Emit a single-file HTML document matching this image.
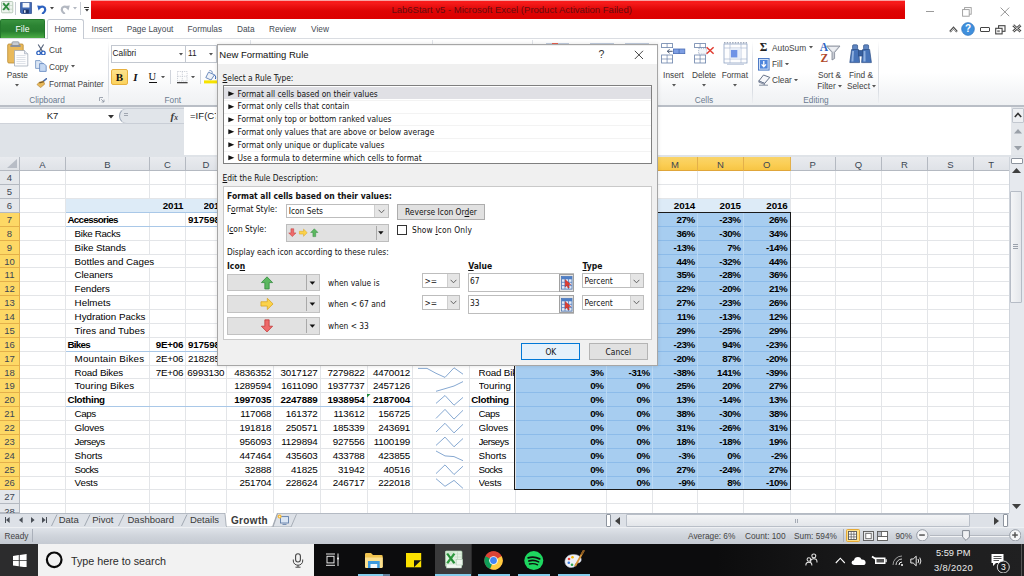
<!DOCTYPE html>
<html lang="en"><head><meta charset="utf-8"><title>Lab6Start v5 - Microsoft Excel</title>
<style>
html,body{margin:0;padding:0}
body{width:1024px;height:576px;overflow:hidden;position:relative;background:#fff;font-family:"Liberation Sans",sans-serif;color:#222}
.a{position:absolute;box-sizing:border-box}
.t{white-space:nowrap;overflow:visible}
.b{font-weight:bold}
.dlg{font-family:"DejaVu Sans Condensed","Liberation Sans",sans-serif}
.cell{color:#000}
u{text-decoration:underline}

</style></head>
<body>
<div class="a" style="left:0.00px;top:0.00px;width:1024.00px;height:19.00px;background:#fff"></div>
<div class="a" style="left:91.00px;top:0.00px;width:814.00px;height:18.60px;background:linear-gradient(#f9a8a8 0,#f9a0a0 4%,#f81818 8%,#f51a1a 18%,#e91010 35%,#de0303 58%,#dc0000 100%)"></div>
<div class="a t" style="left:391.40px;top:3.00px;line-height:14px;height:14px;font-size:9.5px;color:#650c10;letter-spacing:0.004px;">Lab6Start v5 - Microsoft Excel (Product Activation Failed)</div>
<div class="a" style="left:0.00px;top:19.00px;width:1024.00px;height:19.50px;background:#fff"></div>
<div class="a" style="left:0.00px;top:38.00px;width:1024.00px;height:67.50px;background:linear-gradient(#ffffff 0,#ffffff 50%,#f4f5f7 82%,#eff1f3 100%);border-top:1px solid #dadde2"></div>
<div class="a" style="left:0.00px;top:105.00px;width:1024.00px;height:2.00px;background:#b9bec6"></div>
<div class="a" style="left:0.00px;top:19.00px;width:45.30px;height:19.00px;background:linear-gradient(#3a9340 0,#2c8433 30%,#287e2f 62%,#3c9a3c 85%,#4cac45 100%);border-radius:2px 2px 0 0;border:1px solid #24782c;border-bottom:none"></div>
<div class="a t" style="left:2.50px;width:40px;text-align:center;top:22.00px;line-height:14px;height:14px;font-size:8.6px;color:#fff">File</div>
<div class="a" style="left:47.30px;top:19.30px;width:36.50px;height:19.70px;background:#fff;border:1px solid #c5cad3;border-bottom:none;border-radius:2.5px 2.5px 0 0"></div>
<div class="a t" style="left:25.50px;width:80px;text-align:center;top:22.00px;line-height:14px;height:14px;font-size:8.3px;color:#454a52">Home</div>
<div class="a t" style="left:62.00px;width:80px;text-align:center;top:22.00px;line-height:14px;height:14px;font-size:8.3px;color:#454a52">Insert</div>
<div class="a t" style="left:110.00px;width:80px;text-align:center;top:22.00px;line-height:14px;height:14px;font-size:8.3px;color:#454a52">Page Layout</div>
<div class="a t" style="left:164.75px;width:80px;text-align:center;top:22.00px;line-height:14px;height:14px;font-size:8.3px;color:#454a52">Formulas</div>
<div class="a t" style="left:205.75px;width:80px;text-align:center;top:22.00px;line-height:14px;height:14px;font-size:8.3px;color:#454a52">Data</div>
<div class="a t" style="left:242.50px;width:80px;text-align:center;top:22.00px;line-height:14px;height:14px;font-size:8.3px;color:#454a52">Review</div>
<div class="a t" style="left:280.00px;width:80px;text-align:center;top:22.00px;line-height:14px;height:14px;font-size:8.3px;color:#454a52">View</div>
<svg class="a" style="left:1.00px;top:1.00px;" width="12.5" height="12.5" viewBox="0 0 12.5 12.5"><rect x="0.5" y="0.5" width="11.3" height="11.3" rx="1" fill="#eef4ee" stroke="#9fb8a2" stroke-width="0.7"/><path d="M0.8,8.2H11.5M8.2,0.8V11.5M0.8,4.5H11.5" stroke="#b7cbb9" stroke-width="0.6"/><path d="M2.2,2.2 L8,9 M8,2.2 L2.2,9" stroke="#2e8b3d" stroke-width="1.9"/></svg>
<div class="a" style="left:15.00px;top:2.00px;width:1.00px;height:13.00px;background:#c8ccd3"></div>
<svg class="a" style="left:19.50px;top:1.80px;" width="12" height="12" viewBox="0 0 12 12"><path d="M0.5,0.5H11.5V11.5H1.6L0.5,10.4Z" fill="#4169b4" stroke="#2b4b8c" stroke-width="0.7"/><rect x="2.6" y="0.9" width="6.8" height="4.6" fill="#f5f7fb"/><rect x="3.2" y="7.5" width="5.6" height="3.9" fill="#1f3566"/><rect x="4" y="8.2" width="1.6" height="2.6" fill="#dfe6f3"/></svg>
<svg class="a" style="left:36.50px;top:3.50px;" width="10" height="10" viewBox="0 0 10 10"><path d="M2.2,4.2 C4.5,1.3 8.6,2.6 8.2,6 C8,7.4 7,8.6 5.8,9.4" fill="none" stroke="#2d62c0" stroke-width="2.1" stroke-linecap="round"/><polygon points="0.2,1.6 5,2 1.6,6.4" fill="#2d62c0"/></svg>
<svg class="a" style="left:50.00px;top:7.00px;" width="4" height="2.6" viewBox="0 0 4 2.6"><polygon points="0,0 4,0 2,2.4" fill="#444"/></svg>
<svg class="a" style="left:60.00px;top:3.50px;" width="10" height="10" viewBox="0 0 10 10"><path d="M7.8,4.2 C5.5,1.3 1.4,2.6 1.8,6 C2,7.4 3,8.6 4.2,9.4" fill="none" stroke="#b3b8c1" stroke-width="2.1" stroke-linecap="round"/><polygon points="9.8,1.6 5,2 8.4,6.4" fill="#b3b8c1"/></svg>
<svg class="a" style="left:72.50px;top:7.00px;" width="4" height="2.6" viewBox="0 0 4 2.6"><polygon points="0,0 4,0 2,2.4" fill="#b3b8c1"/></svg>
<div class="a" style="left:80.00px;top:2.00px;width:1.00px;height:13.00px;background:#c8ccd3"></div>
<div class="a" style="left:84.30px;top:6.80px;width:4.60px;height:1.00px;background:#333"></div>
<svg class="a" style="left:84.60px;top:9.00px;" width="4" height="2.6" viewBox="0 0 4 2.6"><polygon points="0,0 4,0 2,2.4" fill="#333"/></svg>
<div class="a" style="left:926.00px;top:11.00px;width:8.30px;height:1.00px;background:#9a9a9a"></div>
<svg class="a" style="left:961.50px;top:6.50px;" width="10" height="10" viewBox="0 0 10 10"><g fill="#fff" stroke="#9a9a9a" stroke-width="0.9"><rect x="2.6" y="0.6" width="6.6" height="6.6"/><rect x="0.6" y="2.6" width="6.6" height="6.6"/></g></svg>
<svg class="a" style="left:999.50px;top:7.00px;" width="10" height="10" viewBox="0 0 10 10"><path d="M0.6,0.6 L9.2,9.2 M9.2,0.6 L0.6,9.2" stroke="#8a8a8a" stroke-width="0.9" fill="none"/></svg>
<svg class="a" style="left:948.50px;top:25.50px;" width="9" height="7" viewBox="0 0 9 7"><polyline points="1,5.8 4.5,1.8 8,5.8" fill="none" stroke="#505050" stroke-width="2.1" stroke-linejoin="miter"/><polyline points="1.6,5.6 4.5,2.4 7.4,5.6" fill="none" stroke="#fff" stroke-width="0.7"/></svg>
<svg class="a" style="left:961.00px;top:21.50px;" width="14" height="14" viewBox="0 0 14 14"><circle cx="7" cy="7" r="6.4" fill="#3f8fdc" stroke="#2a6fb8" stroke-width="0.6"/></svg>
<div class="a t" style="left:962.00px;width:12px;text-align:center;top:21.60px;line-height:14px;height:14px;font-size:10px;color:#fff;font-weight:bold">?</div>
<div class="a" style="left:980.00px;top:27.00px;width:9.60px;height:5.00px;border:1.4px solid #444;border-radius:1px;background:#fff"></div>
<svg class="a" style="left:994.50px;top:24.50px;" width="11" height="10" viewBox="0 0 11 10"><g fill="#fff" stroke="#444" stroke-width="1.1"><rect x="3.6" y="0.7" width="6.4" height="5.6"/><rect x="0.7" y="3.3" width="6.4" height="5.6"/></g><rect x="2.2" y="5.2" width="2.6" height="2" fill="#888"/></svg>
<svg class="a" style="left:1011.50px;top:24.00px;" width="10" height="9" viewBox="0 0 10 9"><path d="M1.2,1.2 L8.6,7.6 M8.6,1.2 L1.2,7.6" stroke="#444" stroke-width="2.6" fill="none"/><path d="M1.2,1.2 L8.6,7.6 M8.6,1.2 L1.2,7.6" stroke="#fff" stroke-width="0.8" fill="none"/></svg>
<svg class="a" style="left:7.00px;top:41.00px;" width="22" height="26" viewBox="0 0 22 26"><rect x="0.7" y="3" width="15.5" height="19" rx="1.2" fill="#e9b95a" stroke="#b98a34" stroke-width="0.8"/><rect x="5" y="0.8" width="7" height="4.2" rx="1" fill="#c9cdd4" stroke="#7f8691" stroke-width="0.7"/><rect x="3.4" y="4" width="10.2" height="2" fill="#8b919c"/><path d="M7.5,9.5H17.5L20.8,12.8V25H7.5Z" fill="#fdfdfe" stroke="#9aa3b2" stroke-width="0.7"/><path d="M17.5,9.5V12.8H20.8" fill="#dfe4ec" stroke="#9aa3b2" stroke-width="0.6"/><path d="M9.5,14.5H18.5M9.5,16.5H18.5M9.5,18.5H18.5M9.5,20.5H18.5M9.5,22.5H18.5" stroke="#d0d5de" stroke-width="0.7"/></svg>
<div class="a t" style="left:-2.70px;width:40px;text-align:center;top:67.60px;line-height:14px;height:14px;font-size:8.3px;color:#414141">Paste</div>
<svg class="a" style="left:15.00px;top:84.00px;" width="4" height="2.6" viewBox="0 0 4 2.6"><polygon points="0,0 4,0 2,2.4" fill="#555"/></svg>
<svg class="a" style="left:36.00px;top:43.50px;" width="10" height="11.5" viewBox="0 0 10 11.5"><path d="M2.2,0.5 L6.6,7.6 M7.6,0.5 L3.2,7.6" stroke="#55627a" stroke-width="1.1" fill="none"/><ellipse cx="2.6" cy="9" rx="1.8" ry="1.9" fill="none" stroke="#2d62c0" stroke-width="1.3"/><ellipse cx="7.3" cy="9" rx="1.8" ry="1.9" fill="none" stroke="#2d62c0" stroke-width="1.3"/></svg>
<div class="a t" style="left:49.00px;top:42.60px;line-height:14px;height:14px;font-size:8.3px;color:#414141">Cut</div>
<svg class="a" style="left:35.00px;top:60.00px;" width="12" height="12" viewBox="0 0 12 12"><path d="M0.6,0.6H5L7,2.6V8.4H0.6Z" fill="#dbe6f5" stroke="#6f8fbf" stroke-width="0.8"/><path d="M4.6,3.6H9L11.2,5.8V11.4H4.6Z" fill="#c5d8f2" stroke="#5c82bd" stroke-width="0.8"/></svg>
<div class="a t" style="left:49.00px;top:59.60px;line-height:14px;height:14px;font-size:8.3px;color:#414141">Copy</div>
<svg class="a" style="left:70.50px;top:65.40px;" width="4" height="2.6" viewBox="0 0 4 2.6"><polygon points="0,0 4,0 2,2.4" fill="#555"/></svg>
<svg class="a" style="left:35.50px;top:77.50px;" width="11.5" height="10.5" viewBox="0 0 11.5 10.5"><path d="M7.2,3.4 L10.6,0.6" stroke="#4a6aa8" stroke-width="1.5" stroke-linecap="round"/><path d="M3.2,4.2 L7.6,3.2 L8.6,6.2 L4.6,9.6 L1,6.6 Z" fill="#e9b95a" stroke="#a87b2c" stroke-width="0.6"/><path d="M3.2,4.2 L7.6,3.2 L7.9,4.3 L3.5,5.4 Z" fill="#7b5a22"/></svg>
<div class="a t" style="left:49.00px;top:76.60px;line-height:14px;height:14px;font-size:8.3px;color:#414141">Format Painter</div>
<div class="a t" style="left:17.00px;width:60px;text-align:center;top:92.60px;line-height:14px;height:14px;font-size:8.3px;color:#6b7b90">Clipboard</div>
<svg class="a" style="left:99.00px;top:96.80px;" width="6" height="6" viewBox="0 0 6 6"><path d="M0.5,4V0.5H4" fill="none" stroke="#8a93a1" stroke-width="0.8"/><path d="M2.2,2.2L5,5M5,2.6V5H2.6" fill="none" stroke="#8a93a1" stroke-width="0.8"/></svg>
<div class="a" style="left:108.30px;top:41.00px;width:1.00px;height:62.00px;background:linear-gradient(#fff,#dde0e6 30%,#d9dde3 80%,#eceef1)"></div>
<div class="a" style="left:111.00px;top:45.30px;width:105.50px;height:17.40px;background:#fff;border:1px solid #c3c8d0"></div>
<div class="a" style="left:184.80px;top:45.30px;width:1.00px;height:17.40px;background:#c3c8d0"></div>
<div class="a t" style="left:112.60px;top:46.20px;line-height:14px;height:14px;font-size:8.3px;color:#222">Calibri</div>
<svg class="a" style="left:179.00px;top:53.10px;" width="4" height="2.6" viewBox="0 0 4 2.6"><polygon points="0,0 4,0 2,2.4" fill="#555"/></svg>
<div class="a t" style="left:188.00px;top:46.20px;line-height:14px;height:14px;font-size:8.3px;color:#222">11</div>
<svg class="a" style="left:209.00px;top:53.10px;" width="4" height="2.6" viewBox="0 0 4 2.6"><polygon points="0,0 4,0 2,2.4" fill="#555"/></svg>
<div class="a" style="left:111.00px;top:69.00px;width:16.60px;height:16.20px;background:linear-gradient(#fde28c,#fbd25c);border:1px solid #e8b13e;border-radius:2px"></div>
<div class="a t" style="left:112.30px;width:14px;text-align:center;top:70.00px;line-height:14px;height:14px;font-size:11px;color:#111;font-family:'Liberation Serif',serif;font-weight:bold">B</div>
<div class="a t" style="left:128.50px;width:14px;text-align:center;top:70.00px;line-height:14px;height:14px;font-size:11px;color:#111;font-family:'Liberation Serif',serif;font-weight:bold;font-style:italic">I</div>
<div class="a t" style="left:145.30px;width:14px;text-align:center;top:69.60px;line-height:14px;height:14px;font-size:10.5px;color:#111;font-family:'Liberation Serif',serif">U</div>
<div class="a" style="left:148.50px;top:82.00px;width:8.00px;height:1.00px;background:#111"></div>
<svg class="a" style="left:161.30px;top:75.80px;" width="4" height="2.6" viewBox="0 0 4 2.6"><polygon points="0,0 4,0 2,2.4" fill="#555"/></svg>
<div class="a" style="left:170.40px;top:70.00px;width:1.00px;height:14.00px;background:#d0d4db"></div>
<svg class="a" style="left:177.00px;top:71.00px;" width="11" height="12.5" viewBox="0 0 11 12.5"><rect x="0.5" y="0.5" width="9.6" height="9.6" fill="none" stroke="#b9bec8" stroke-width="0.7" stroke-dasharray="1.2,1"/><path d="M5.3,0.5V10M0.5,5.3H10" stroke="#b9bec8" stroke-width="0.7" stroke-dasharray="1.2,1"/><rect x="0" y="11" width="10.6" height="1.3" fill="#444"/></svg>
<svg class="a" style="left:190.70px;top:75.80px;" width="4" height="2.6" viewBox="0 0 4 2.6"><polygon points="0,0 4,0 2,2.4" fill="#555"/></svg>
<div class="a" style="left:199.50px;top:70.00px;width:1.00px;height:14.00px;background:#d0d4db"></div>
<svg class="a" style="left:203.50px;top:70.00px;" width="14" height="14" viewBox="0 0 14 14"><path d="M4.5,2.2 L10.5,4.8 L7,10 L1.8,7.6 Z" fill="#eef2f8" stroke="#5c7fb6" stroke-width="0.9"/><path d="M5.2,0.8 Q8.6,-0.2 8.2,3.6" fill="none" stroke="#5c7fb6" stroke-width="0.8"/><path d="M10.5,4.8 Q12.6,7 11.4,9" fill="none" stroke="#3d6fc0" stroke-width="1"/><rect x="0" y="10.4" width="13" height="3" fill="#f7e300"/></svg>
<div class="a t" style="left:152.80px;width:40px;text-align:center;top:92.60px;line-height:14px;height:14px;font-size:8.3px;color:#6b7b90">Font</div>
<div class="a" style="left:545.80px;top:43.20px;width:23.20px;height:1.20px;background:#c3cee0"></div>
<div class="a" style="left:589.50px;top:43.20px;width:24.50px;height:1.20px;background:#c3cee0"></div>
<div class="a" style="left:625.00px;top:43.20px;width:24.00px;height:1.20px;background:#c3cee0"></div>
<div class="a" style="left:552.00px;top:43.20px;width:6.00px;height:1.20px;background:#e8604f"></div>
<div class="a" style="left:250.00px;top:40.00px;width:1.00px;height:5.00px;background:#e1e4e9"></div>
<div class="a" style="left:432.00px;top:40.00px;width:1.00px;height:5.00px;background:#e1e4e9"></div>
<div class="a" style="left:531.50px;top:40.00px;width:1.00px;height:5.00px;background:#e1e4e9"></div>
<div class="a" style="left:657.30px;top:41.00px;width:1.00px;height:62.00px;background:linear-gradient(#fff,#dde0e6 30%,#d9dde3 80%,#eceef1)"></div>
<svg class="a" style="left:661.00px;top:43.00px;" width="25" height="21" viewBox="0 0 25 21"><rect x="0.6" y="0.6" width="11" height="4" fill="#fff" stroke="#6a82aa" stroke-width="0.8"/><path d="M6.1,0.6V4.6" stroke="#6a82aa" stroke-width="0.7"/><rect x="0.6" y="12" width="11" height="8" fill="#fff" stroke="#6a82aa" stroke-width="0.8"/><path d="M6.1,12V20M0.6,16H11.6" stroke="#6a82aa" stroke-width="0.7"/><rect x="12.4" y="6" width="11.4" height="4.6" fill="#7d9ee3" stroke="#4a6db5" stroke-width="0.8"/><path d="M18.1,6V10.6" stroke="#3f65ad" stroke-width="0.7"/><path d="M11.6,8.3H6.4M8.6,6.4L6.2,8.3L8.6,10.2" fill="none" stroke="#4a5a75" stroke-width="1"/></svg>
<div class="a t" style="left:653.50px;width:40px;text-align:center;top:67.60px;line-height:14px;height:14px;font-size:8.3px;color:#414141">Insert</div>
<svg class="a" style="left:671.50px;top:84.00px;" width="4" height="2.6" viewBox="0 0 4 2.6"><polygon points="0,0 4,0 2,2.4" fill="#555"/></svg>
<svg class="a" style="left:694.00px;top:43.00px;" width="22" height="21" viewBox="0 0 22 21"><rect x="0.6" y="0.6" width="11" height="4" fill="#fff" stroke="#6a82aa" stroke-width="0.8"/><path d="M6.1,0.6V4.6" stroke="#6a82aa" stroke-width="0.7"/><rect x="0.6" y="12" width="11" height="8" fill="#fff" stroke="#6a82aa" stroke-width="0.8"/><path d="M6.1,12V20M0.6,16H11.6" stroke="#6a82aa" stroke-width="0.7"/><rect x="4.6" y="5.6" width="8" height="5.4" fill="#f3f5f9" stroke="#9aa7be" stroke-width="0.7" stroke-dasharray="1.2,1"/><path d="M12.6,4.2L19.6,10.8M19.6,4.2L12.6,10.8" stroke="#e03c31" stroke-width="1.5"/></svg>
<div class="a t" style="left:684.00px;width:40px;text-align:center;top:67.60px;line-height:14px;height:14px;font-size:8.3px;color:#414141">Delete</div>
<svg class="a" style="left:702.00px;top:84.00px;" width="4" height="2.6" viewBox="0 0 4 2.6"><polygon points="0,0 4,0 2,2.4" fill="#555"/></svg>
<svg class="a" style="left:722.50px;top:42.00px;" width="26" height="24" viewBox="0 0 26 24"><rect x="1" y="2" width="23" height="19" fill="#fdfdfe" stroke="#8fa3c4" stroke-width="0.8"/><path d="M1,6H24M1,17H24M7,2V21M18,2V21" stroke="#a9b8d2" stroke-width="0.7"/><rect x="7.4" y="6.4" width="10.2" height="10.2" fill="#e6edf9"/><rect x="7.9" y="8" width="6.4" height="7.4" fill="#6f93e6"/><path d="M1,0.8H24" stroke="#59698a" stroke-width="0.8" stroke-dasharray="1.5,1.2"/><path d="M4,21.5H21V23H4Z" fill="#c9d2e2"/></svg>
<div class="a t" style="left:714.80px;width:40px;text-align:center;top:67.60px;line-height:14px;height:14px;font-size:8.3px;color:#414141">Format</div>
<svg class="a" style="left:732.80px;top:84.00px;" width="4" height="2.6" viewBox="0 0 4 2.6"><polygon points="0,0 4,0 2,2.4" fill="#555"/></svg>
<div class="a t" style="left:684.00px;width:40px;text-align:center;top:92.60px;line-height:14px;height:14px;font-size:8.3px;color:#6b7b90">Cells</div>
<div class="a" style="left:752.30px;top:41.00px;width:1.00px;height:62.00px;background:linear-gradient(#fff,#dde0e6 30%,#d9dde3 80%,#eceef1)"></div>
<div class="a t" style="left:757.50px;width:12px;text-align:center;top:40.40px;line-height:14px;height:14px;font-size:11.5px;color:#222;font-weight:bold;font-family:'Liberation Serif','DejaVu Serif',serif">Σ</div>
<div class="a t" style="left:772.00px;top:40.60px;line-height:14px;height:14px;font-size:8.3px;color:#414141">AutoSum</div>
<svg class="a" style="left:809.00px;top:46.40px;" width="4" height="2.6" viewBox="0 0 4 2.6"><polygon points="0,0 4,0 2,2.4" fill="#555"/></svg>
<svg class="a" style="left:758.00px;top:57.50px;" width="12" height="13" viewBox="0 0 12 13"><rect x="0.5" y="0.5" width="10.6" height="11.6" fill="#cfe0f7" stroke="#3f6fc0" stroke-width="0.9"/><rect x="2" y="2" width="7.6" height="8.6" fill="#4f86dc"/><path d="M5.8,3V8.2M3.6,6.4L5.8,8.8L8,6.4" fill="none" stroke="#fff" stroke-width="1.3"/></svg>
<div class="a t" style="left:772.00px;top:57.00px;line-height:14px;height:14px;font-size:8.3px;color:#414141">Fill</div>
<svg class="a" style="left:785.00px;top:62.80px;" width="4" height="2.6" viewBox="0 0 4 2.6"><polygon points="0,0 4,0 2,2.4" fill="#555"/></svg>
<svg class="a" style="left:757.50px;top:73.50px;" width="13" height="12" viewBox="0 0 13 12"><path d="M5.5,1 L11.8,3.4 L6.6,9.4 L0.8,7 Z" fill="#f6f7fa" stroke="#55627a" stroke-width="0.9"/><path d="M0.8,7 L6.6,9.4 L6.6,10.6 L0.8,8.2 Z" fill="#c9cfdb" stroke="#55627a" stroke-width="0.6"/><path d="M1,11.2H10" stroke="#55627a" stroke-width="0.7"/></svg>
<div class="a t" style="left:772.00px;top:73.00px;line-height:14px;height:14px;font-size:8.3px;color:#414141">Clear</div>
<svg class="a" style="left:794.00px;top:78.80px;" width="4" height="2.6" viewBox="0 0 4 2.6"><polygon points="0,0 4,0 2,2.4" fill="#555"/></svg>
<div class="a t" style="left:819.00px;width:10px;text-align:center;top:40.30px;line-height:14px;height:14px;font-size:11.5px;color:#2d62c0;font-weight:bold;font-family:'Liberation Serif',serif">A</div>
<div class="a t" style="left:819.30px;width:10px;text-align:center;top:50.80px;line-height:14px;height:14px;font-size:11.5px;color:#b0482a;font-weight:bold;font-family:'Liberation Serif',serif">Z</div>
<svg class="a" style="left:825.00px;top:44.50px;" width="16" height="16" viewBox="0 0 16 16"><path d="M1.5,1 H15 L9.6,7.4 V13.5 L7,15 V7.4 Z" fill="#c8ccd4" stroke="#7f8793" stroke-width="0.8"/><path d="M3.5,2 H13 L9,6.6 H7.6 Z" fill="#eceef2"/></svg>
<div class="a t" style="left:809.50px;width:40px;text-align:center;top:67.60px;line-height:14px;height:14px;font-size:8.3px;color:#414141">Sort &amp;</div>
<div class="a t" style="left:806.50px;width:40px;text-align:center;top:79.00px;line-height:14px;height:14px;font-size:8.3px;color:#414141">Filter</div>
<svg class="a" style="left:838.00px;top:85.20px;" width="4" height="2.6" viewBox="0 0 4 2.6"><polygon points="0,0 4,0 2,2.4" fill="#555"/></svg>
<svg class="a" style="left:849.00px;top:43.50px;" width="24" height="20" viewBox="0 0 24 20"><g stroke="#2c4f86" stroke-width="0.7"><rect x="3.6" y="0.8" width="5" height="5" rx="1" fill="#5f86c2"/><rect x="14.6" y="0.8" width="5" height="5" rx="1" fill="#5f86c2"/><path d="M2.6,5.5 H9.6 L10.6,18.6 H0.8 Z" fill="#4673b8"/><path d="M13.6,5.5 H20.6 L22.4,18.6 H12.6 Z" fill="#4673b8"/><rect x="9.4" y="6.5" width="4.4" height="5.5" fill="#365f9f"/></g><path d="M3.2,7 H5 L4.4,17.6 H2.4 Z" fill="#8fb0df"/><path d="M14.6,7 H16.4 L16.6,17.6 H14.4 Z" fill="#8fb0df"/></svg>
<div class="a t" style="left:841.00px;width:40px;text-align:center;top:67.60px;line-height:14px;height:14px;font-size:8.3px;color:#414141">Find &amp;</div>
<div class="a t" style="left:838.50px;width:40px;text-align:center;top:79.00px;line-height:14px;height:14px;font-size:8.3px;color:#414141">Select</div>
<svg class="a" style="left:871.50px;top:85.20px;" width="4" height="2.6" viewBox="0 0 4 2.6"><polygon points="0,0 4,0 2,2.4" fill="#555"/></svg>
<div class="a t" style="left:796.00px;width:40px;text-align:center;top:92.60px;line-height:14px;height:14px;font-size:8.3px;color:#6b7b90">Editing</div>
<div class="a" style="left:878.30px;top:41.00px;width:1.00px;height:62.00px;background:linear-gradient(#fff,#dde0e6 30%,#d9dde3 80%,#eceef1)"></div>
<div class="a" style="left:0.00px;top:107.00px;width:1024.00px;height:50.00px;background:#dfe3e8"></div>
<div class="a" style="left:184.00px;top:107.00px;width:827.00px;height:47.50px;background:#fff"></div>
<div class="a" style="left:0.00px;top:107.80px;width:128.00px;height:15.80px;background:#fff;border-bottom:1px solid #cfd3da;border-top:1px solid #cfd3da"></div>
<div class="a t" style="left:32.50px;width:40px;text-align:center;top:109.20px;line-height:14px;height:14px;font-size:9.5px;color:#222">K7</div>
<svg class="a" style="left:107.50px;top:114.50px;" width="6" height="4" viewBox="0 0 6 4"><polygon points="0,0 6,0 3,3.5" fill="#333"/></svg>
<div class="a" style="left:119.30px;top:107.80px;width:64.70px;height:15.80px;background:#e1e5ea;border:1px solid #c9ced6;border-left:1px solid #98a3b3;border-right:none;border-radius:8px 0 0 8px"></div>
<div class="a" style="left:123.50px;top:113.00px;width:4.00px;height:1.00px;background:#a0a6b0"></div>
<div class="a" style="left:123.50px;top:115.00px;width:4.00px;height:1.00px;background:#a0a6b0"></div>
<div class="a t" style="left:170.50px;top:109.30px;line-height:14px;height:14px;font-size:11px;font-family:'Liberation Serif',serif;font-style:italic;font-weight:bold;color:#3a3a3a">f</div>
<div class="a t" style="left:174.30px;top:111.20px;line-height:14px;height:14px;font-size:7.5px;font-family:'Liberation Serif',serif;font-style:italic;font-weight:bold;color:#3a3a3a">x</div>
<div class="a t" style="left:190px;top:109.2px;width:26px;overflow:hidden;line-height:14px;height:14px;font-size:9.6px;color:#222">=IF(C7=0,0,(D7-C7)/C7)</div>
<div class="a" style="left:1011.00px;top:107.00px;width:13.00px;height:47.50px;background:#e4e7eb"></div>
<div class="a" style="left:1011.50px;top:108.00px;width:12.00px;height:14.50px;background:#eef0f3;border:1px solid #c2c7cf;border-radius:1px"></div>
<svg class="a" style="left:1014.00px;top:112.00px;" width="8" height="6" viewBox="0 0 8 6"><polyline points="0.8,5 4,1.5 7.2,5" fill="none" stroke="#333" stroke-width="1.6"/></svg>
<svg class="a" style="left:1013.50px;top:128.50px;" width="8" height="5" viewBox="0 0 8 5"><polygon points="4,0 8,4.5 0,4.5" fill="#9aa0a8"/></svg>
<svg class="a" style="left:1013.50px;top:145.50px;" width="8" height="5" viewBox="0 0 8 5"><polygon points="0,0 8,0 4,4.5" fill="#9aa0a8"/></svg>
<div class="a" style="left:0.00px;top:154.50px;width:1024.00px;height:2.50px;background:#dfe3e8"></div>
<div class="a" style="left:0.00px;top:157.00px;width:1010.00px;height:356.00px;background:#fff"></div>
<div class="a" style="left:515.00px;top:212.01px;width:275.00px;height:277.40px;background:#a7cdf0"></div>
<div class="a" style="left:19.50px;top:184.27px;width:989.50px;height:1.00px;background:#e3e5e8"></div>
<div class="a" style="left:19.50px;top:198.14px;width:989.50px;height:1.00px;background:#e3e5e8"></div>
<div class="a" style="left:19.50px;top:212.01px;width:989.50px;height:1.00px;background:#e3e5e8"></div>
<div class="a" style="left:19.50px;top:225.88px;width:989.50px;height:1.00px;background:#e3e5e8"></div>
<div class="a" style="left:19.50px;top:239.75px;width:989.50px;height:1.00px;background:#e3e5e8"></div>
<div class="a" style="left:19.50px;top:253.62px;width:989.50px;height:1.00px;background:#e3e5e8"></div>
<div class="a" style="left:19.50px;top:267.49px;width:989.50px;height:1.00px;background:#e3e5e8"></div>
<div class="a" style="left:19.50px;top:281.36px;width:989.50px;height:1.00px;background:#e3e5e8"></div>
<div class="a" style="left:19.50px;top:295.23px;width:989.50px;height:1.00px;background:#e3e5e8"></div>
<div class="a" style="left:19.50px;top:309.10px;width:989.50px;height:1.00px;background:#e3e5e8"></div>
<div class="a" style="left:19.50px;top:322.97px;width:989.50px;height:1.00px;background:#e3e5e8"></div>
<div class="a" style="left:19.50px;top:336.84px;width:989.50px;height:1.00px;background:#e3e5e8"></div>
<div class="a" style="left:19.50px;top:350.71px;width:989.50px;height:1.00px;background:#e3e5e8"></div>
<div class="a" style="left:19.50px;top:364.58px;width:989.50px;height:1.00px;background:#e3e5e8"></div>
<div class="a" style="left:19.50px;top:378.45px;width:989.50px;height:1.00px;background:#e3e5e8"></div>
<div class="a" style="left:19.50px;top:392.32px;width:989.50px;height:1.00px;background:#e3e5e8"></div>
<div class="a" style="left:19.50px;top:406.19px;width:989.50px;height:1.00px;background:#e3e5e8"></div>
<div class="a" style="left:19.50px;top:420.06px;width:989.50px;height:1.00px;background:#e3e5e8"></div>
<div class="a" style="left:19.50px;top:433.93px;width:989.50px;height:1.00px;background:#e3e5e8"></div>
<div class="a" style="left:19.50px;top:447.80px;width:989.50px;height:1.00px;background:#e3e5e8"></div>
<div class="a" style="left:19.50px;top:461.67px;width:989.50px;height:1.00px;background:#e3e5e8"></div>
<div class="a" style="left:19.50px;top:475.54px;width:989.50px;height:1.00px;background:#e3e5e8"></div>
<div class="a" style="left:19.50px;top:489.41px;width:989.50px;height:1.00px;background:#e3e5e8"></div>
<div class="a" style="left:19.50px;top:503.28px;width:989.50px;height:1.00px;background:#e3e5e8"></div>
<div class="a" style="left:65.00px;top:170.50px;width:1.00px;height:342.50px;background:#e3e5e8"></div>
<div class="a" style="left:149.00px;top:170.50px;width:1.00px;height:342.50px;background:#e3e5e8"></div>
<div class="a" style="left:185.00px;top:170.50px;width:1.00px;height:342.50px;background:#e3e5e8"></div>
<div class="a" style="left:226.00px;top:170.50px;width:1.00px;height:342.50px;background:#e3e5e8"></div>
<div class="a" style="left:273.25px;top:170.50px;width:1.00px;height:342.50px;background:#e3e5e8"></div>
<div class="a" style="left:319.50px;top:170.50px;width:1.00px;height:342.50px;background:#e3e5e8"></div>
<div class="a" style="left:366.50px;top:170.50px;width:1.00px;height:342.50px;background:#e3e5e8"></div>
<div class="a" style="left:412.00px;top:170.50px;width:1.00px;height:342.50px;background:#e3e5e8"></div>
<div class="a" style="left:468.90px;top:170.50px;width:1.00px;height:342.50px;background:#e3e5e8"></div>
<div class="a" style="left:514.50px;top:170.50px;width:1.00px;height:342.50px;background:#e3e5e8"></div>
<div class="a" style="left:605.75px;top:170.50px;width:1.00px;height:342.50px;background:#e3e5e8"></div>
<div class="a" style="left:652.00px;top:170.50px;width:1.00px;height:342.50px;background:#e3e5e8"></div>
<div class="a" style="left:697.00px;top:170.50px;width:1.00px;height:342.50px;background:#e3e5e8"></div>
<div class="a" style="left:742.75px;top:170.50px;width:1.00px;height:342.50px;background:#e3e5e8"></div>
<div class="a" style="left:789.50px;top:170.50px;width:1.00px;height:342.50px;background:#e3e5e8"></div>
<div class="a" style="left:835.00px;top:170.50px;width:1.00px;height:342.50px;background:#e3e5e8"></div>
<div class="a" style="left:880.75px;top:170.50px;width:1.00px;height:342.50px;background:#e3e5e8"></div>
<div class="a" style="left:927.00px;top:170.50px;width:1.00px;height:342.50px;background:#e3e5e8"></div>
<div class="a" style="left:973.00px;top:170.50px;width:1.00px;height:342.50px;background:#e3e5e8"></div>
<div class="a" style="left:1008.50px;top:170.50px;width:1.00px;height:342.50px;background:#e3e5e8"></div>
<div class="a" style="left:65.50px;top:199.14px;width:724.50px;height:12.87px;background:#ddebf7"></div>
<div class="a" style="left:516.00px;top:225.88px;width:274.00px;height:1.00px;background:#8cbbe9"></div>
<div class="a" style="left:516.00px;top:239.75px;width:274.00px;height:1.00px;background:#8cbbe9"></div>
<div class="a" style="left:516.00px;top:253.62px;width:274.00px;height:1.00px;background:#8cbbe9"></div>
<div class="a" style="left:516.00px;top:267.49px;width:274.00px;height:1.00px;background:#8cbbe9"></div>
<div class="a" style="left:516.00px;top:281.36px;width:274.00px;height:1.00px;background:#8cbbe9"></div>
<div class="a" style="left:516.00px;top:295.23px;width:274.00px;height:1.00px;background:#8cbbe9"></div>
<div class="a" style="left:516.00px;top:309.10px;width:274.00px;height:1.00px;background:#8cbbe9"></div>
<div class="a" style="left:516.00px;top:322.97px;width:274.00px;height:1.00px;background:#8cbbe9"></div>
<div class="a" style="left:516.00px;top:336.84px;width:274.00px;height:1.00px;background:#8cbbe9"></div>
<div class="a" style="left:516.00px;top:350.71px;width:274.00px;height:1.00px;background:#8cbbe9"></div>
<div class="a" style="left:516.00px;top:364.58px;width:274.00px;height:1.00px;background:#8cbbe9"></div>
<div class="a" style="left:516.00px;top:378.45px;width:274.00px;height:1.00px;background:#8cbbe9"></div>
<div class="a" style="left:516.00px;top:392.32px;width:274.00px;height:1.00px;background:#8cbbe9"></div>
<div class="a" style="left:516.00px;top:406.19px;width:274.00px;height:1.00px;background:#8cbbe9"></div>
<div class="a" style="left:516.00px;top:420.06px;width:274.00px;height:1.00px;background:#8cbbe9"></div>
<div class="a" style="left:516.00px;top:433.93px;width:274.00px;height:1.00px;background:#8cbbe9"></div>
<div class="a" style="left:516.00px;top:447.80px;width:274.00px;height:1.00px;background:#8cbbe9"></div>
<div class="a" style="left:516.00px;top:461.67px;width:274.00px;height:1.00px;background:#8cbbe9"></div>
<div class="a" style="left:516.00px;top:475.54px;width:274.00px;height:1.00px;background:#8cbbe9"></div>
<div class="a" style="left:605.75px;top:213.01px;width:1.00px;height:277.40px;background:#b9d8f4"></div>
<div class="a" style="left:652.00px;top:213.01px;width:1.00px;height:277.40px;background:#b9d8f4"></div>
<div class="a" style="left:697.00px;top:213.01px;width:1.00px;height:277.40px;background:#b9d8f4"></div>
<div class="a" style="left:742.75px;top:213.01px;width:1.00px;height:277.40px;background:#b9d8f4"></div>
<div class="a" style="left:148.00px;top:254.62px;width:3.00px;height:12.87px;background:#fff"></div>
<div class="a" style="left:65.50px;top:212.01px;width:347.00px;height:1.00px;background:#a9c8e8"></div>
<div class="a" style="left:65.50px;top:225.88px;width:347.00px;height:1.00px;background:#a9c8e8"></div>
<div class="a" style="left:65.50px;top:350.71px;width:347.00px;height:1.00px;background:#a9c8e8"></div>
<div class="a" style="left:65.50px;top:406.19px;width:347.00px;height:1.00px;background:#a9c8e8"></div>
<div class="a" style="left:469.40px;top:406.19px;width:45.60px;height:1.00px;background:#a9c8e8"></div>
<div class="a" style="left:0.00px;top:157.00px;width:1010.00px;height:14.40px;background:linear-gradient(#e9ebef,#dfe2e7);border-bottom:1px solid #b4b9c1"></div>
<div class="a" style="left:652.50px;top:157.00px;width:137.50px;height:14.40px;background:linear-gradient(#f9d46a,#fbcf57 50%,#f7c544);border-bottom:1px solid #e0a63a"></div>
<div class="a" style="left:19.00px;top:157.00px;width:1.00px;height:14.40px;background:#b4b9c1"></div>
<div class="a" style="left:65.00px;top:157.00px;width:1.00px;height:14.40px;background:#b4b9c1"></div>
<div class="a t" style="left:27.50px;width:30px;text-align:center;top:157.80px;line-height:14px;height:14px;font-size:9.5px;color:#3c4653">A</div>
<div class="a" style="left:149.00px;top:157.00px;width:1.00px;height:14.40px;background:#b4b9c1"></div>
<div class="a t" style="left:92.50px;width:30px;text-align:center;top:157.80px;line-height:14px;height:14px;font-size:9.5px;color:#3c4653">B</div>
<div class="a" style="left:185.00px;top:157.00px;width:1.00px;height:14.40px;background:#b4b9c1"></div>
<div class="a t" style="left:152.50px;width:30px;text-align:center;top:157.80px;line-height:14px;height:14px;font-size:9.5px;color:#3c4653">C</div>
<div class="a" style="left:226.00px;top:157.00px;width:1.00px;height:14.40px;background:#b4b9c1"></div>
<div class="a t" style="left:191.00px;width:30px;text-align:center;top:157.80px;line-height:14px;height:14px;font-size:9.5px;color:#3c4653">D</div>
<div class="a" style="left:273.25px;top:157.00px;width:1.00px;height:14.40px;background:#b4b9c1"></div>
<div class="a t" style="left:235.12px;width:30px;text-align:center;top:157.80px;line-height:14px;height:14px;font-size:9.5px;color:#3c4653">E</div>
<div class="a" style="left:319.50px;top:157.00px;width:1.00px;height:14.40px;background:#b4b9c1"></div>
<div class="a t" style="left:281.88px;width:30px;text-align:center;top:157.80px;line-height:14px;height:14px;font-size:9.5px;color:#3c4653">F</div>
<div class="a" style="left:366.50px;top:157.00px;width:1.00px;height:14.40px;background:#b4b9c1"></div>
<div class="a t" style="left:328.50px;width:30px;text-align:center;top:157.80px;line-height:14px;height:14px;font-size:9.5px;color:#3c4653">G</div>
<div class="a" style="left:412.00px;top:157.00px;width:1.00px;height:14.40px;background:#b4b9c1"></div>
<div class="a t" style="left:374.75px;width:30px;text-align:center;top:157.80px;line-height:14px;height:14px;font-size:9.5px;color:#3c4653">H</div>
<div class="a" style="left:468.90px;top:157.00px;width:1.00px;height:14.40px;background:#b4b9c1"></div>
<div class="a t" style="left:425.95px;width:30px;text-align:center;top:157.80px;line-height:14px;height:14px;font-size:9.5px;color:#3c4653">I</div>
<div class="a" style="left:514.50px;top:157.00px;width:1.00px;height:14.40px;background:#b4b9c1"></div>
<div class="a t" style="left:477.20px;width:30px;text-align:center;top:157.80px;line-height:14px;height:14px;font-size:9.5px;color:#3c4653">J</div>
<div class="a" style="left:605.75px;top:157.00px;width:1.00px;height:14.40px;background:#b4b9c1"></div>
<div class="a t" style="left:545.62px;width:30px;text-align:center;top:157.80px;line-height:14px;height:14px;font-size:9.5px;color:#3c4653">K</div>
<div class="a" style="left:652.00px;top:157.00px;width:1.00px;height:14.40px;background:#e3b04a"></div>
<div class="a t" style="left:614.38px;width:30px;text-align:center;top:157.80px;line-height:14px;height:14px;font-size:9.5px;color:#3c4653">L</div>
<div class="a" style="left:697.00px;top:157.00px;width:1.00px;height:14.40px;background:#e3b04a"></div>
<div class="a t" style="left:660.00px;width:30px;text-align:center;top:157.80px;line-height:14px;height:14px;font-size:9.5px;color:#3c4653">M</div>
<div class="a" style="left:742.75px;top:157.00px;width:1.00px;height:14.40px;background:#e3b04a"></div>
<div class="a t" style="left:705.38px;width:30px;text-align:center;top:157.80px;line-height:14px;height:14px;font-size:9.5px;color:#3c4653">N</div>
<div class="a" style="left:789.50px;top:157.00px;width:1.00px;height:14.40px;background:#e3b04a"></div>
<div class="a t" style="left:751.62px;width:30px;text-align:center;top:157.80px;line-height:14px;height:14px;font-size:9.5px;color:#3c4653">O</div>
<div class="a" style="left:835.00px;top:157.00px;width:1.00px;height:14.40px;background:#b4b9c1"></div>
<div class="a t" style="left:797.75px;width:30px;text-align:center;top:157.80px;line-height:14px;height:14px;font-size:9.5px;color:#3c4653">P</div>
<div class="a" style="left:880.75px;top:157.00px;width:1.00px;height:14.40px;background:#b4b9c1"></div>
<div class="a t" style="left:843.38px;width:30px;text-align:center;top:157.80px;line-height:14px;height:14px;font-size:9.5px;color:#3c4653">Q</div>
<div class="a" style="left:927.00px;top:157.00px;width:1.00px;height:14.40px;background:#b4b9c1"></div>
<div class="a t" style="left:889.38px;width:30px;text-align:center;top:157.80px;line-height:14px;height:14px;font-size:9.5px;color:#3c4653">R</div>
<div class="a" style="left:973.00px;top:157.00px;width:1.00px;height:14.40px;background:#b4b9c1"></div>
<div class="a t" style="left:935.50px;width:30px;text-align:center;top:157.80px;line-height:14px;height:14px;font-size:9.5px;color:#3c4653">S</div>
<div class="a" style="left:1008.50px;top:157.00px;width:1.00px;height:14.40px;background:#b4b9c1"></div>
<div class="a t" style="left:976.25px;width:30px;text-align:center;top:157.80px;line-height:14px;height:14px;font-size:9.5px;color:#3c4653">T</div>
<svg class="a" style="left:6.00px;top:159.00px;" width="12" height="10" viewBox="0 0 12 10"><polygon points="11,0 11,9 1,9" fill="#b8bdc6"/></svg>
<div class="a" style="left:0.00px;top:171.40px;width:19.50px;height:13.87px;background:#e4e7eb;border-bottom:1px solid #b4b9c1;border-right:1px solid #b4b9c1"></div>
<div class="a t" style="left:0.00px;width:19px;text-align:center;top:171.34px;line-height:14px;height:14px;font-size:9.5px;color:#3c4653">4</div>
<div class="a" style="left:0.00px;top:185.27px;width:19.50px;height:13.87px;background:#e4e7eb;border-bottom:1px solid #b4b9c1;border-right:1px solid #b4b9c1"></div>
<div class="a t" style="left:0.00px;width:19px;text-align:center;top:185.21px;line-height:14px;height:14px;font-size:9.5px;color:#3c4653">5</div>
<div class="a" style="left:0.00px;top:199.14px;width:19.50px;height:13.87px;background:#e4e7eb;border-bottom:1px solid #b4b9c1;border-right:1px solid #b4b9c1"></div>
<div class="a t" style="left:0.00px;width:19px;text-align:center;top:199.08px;line-height:14px;height:14px;font-size:9.5px;color:#3c4653">6</div>
<div class="a" style="left:0.00px;top:213.01px;width:19.50px;height:13.87px;background:#fdd865;border-bottom:1px solid #e3b04a;border-right:1px solid #e3b04a"></div>
<div class="a t" style="left:0.00px;width:19px;text-align:center;top:212.94px;line-height:14px;height:14px;font-size:9.5px;color:#3c4653">7</div>
<div class="a" style="left:0.00px;top:226.88px;width:19.50px;height:13.87px;background:#fdd865;border-bottom:1px solid #e3b04a;border-right:1px solid #e3b04a"></div>
<div class="a t" style="left:0.00px;width:19px;text-align:center;top:226.81px;line-height:14px;height:14px;font-size:9.5px;color:#3c4653">8</div>
<div class="a" style="left:0.00px;top:240.75px;width:19.50px;height:13.87px;background:#fdd865;border-bottom:1px solid #e3b04a;border-right:1px solid #e3b04a"></div>
<div class="a t" style="left:0.00px;width:19px;text-align:center;top:240.69px;line-height:14px;height:14px;font-size:9.5px;color:#3c4653">9</div>
<div class="a" style="left:0.00px;top:254.62px;width:19.50px;height:13.87px;background:#fdd865;border-bottom:1px solid #e3b04a;border-right:1px solid #e3b04a"></div>
<div class="a t" style="left:0.00px;width:19px;text-align:center;top:254.56px;line-height:14px;height:14px;font-size:9.5px;color:#3c4653">10</div>
<div class="a" style="left:0.00px;top:268.49px;width:19.50px;height:13.87px;background:#fdd865;border-bottom:1px solid #e3b04a;border-right:1px solid #e3b04a"></div>
<div class="a t" style="left:0.00px;width:19px;text-align:center;top:268.43px;line-height:14px;height:14px;font-size:9.5px;color:#3c4653">11</div>
<div class="a" style="left:0.00px;top:282.36px;width:19.50px;height:13.87px;background:#fdd865;border-bottom:1px solid #e3b04a;border-right:1px solid #e3b04a"></div>
<div class="a t" style="left:0.00px;width:19px;text-align:center;top:282.30px;line-height:14px;height:14px;font-size:9.5px;color:#3c4653">12</div>
<div class="a" style="left:0.00px;top:296.23px;width:19.50px;height:13.87px;background:#fdd865;border-bottom:1px solid #e3b04a;border-right:1px solid #e3b04a"></div>
<div class="a t" style="left:0.00px;width:19px;text-align:center;top:296.17px;line-height:14px;height:14px;font-size:9.5px;color:#3c4653">13</div>
<div class="a" style="left:0.00px;top:310.10px;width:19.50px;height:13.87px;background:#fdd865;border-bottom:1px solid #e3b04a;border-right:1px solid #e3b04a"></div>
<div class="a t" style="left:0.00px;width:19px;text-align:center;top:310.04px;line-height:14px;height:14px;font-size:9.5px;color:#3c4653">14</div>
<div class="a" style="left:0.00px;top:323.97px;width:19.50px;height:13.87px;background:#fdd865;border-bottom:1px solid #e3b04a;border-right:1px solid #e3b04a"></div>
<div class="a t" style="left:0.00px;width:19px;text-align:center;top:323.91px;line-height:14px;height:14px;font-size:9.5px;color:#3c4653">15</div>
<div class="a" style="left:0.00px;top:337.84px;width:19.50px;height:13.87px;background:#fdd865;border-bottom:1px solid #e3b04a;border-right:1px solid #e3b04a"></div>
<div class="a t" style="left:0.00px;width:19px;text-align:center;top:337.78px;line-height:14px;height:14px;font-size:9.5px;color:#3c4653">16</div>
<div class="a" style="left:0.00px;top:351.71px;width:19.50px;height:13.87px;background:#fdd865;border-bottom:1px solid #e3b04a;border-right:1px solid #e3b04a"></div>
<div class="a t" style="left:0.00px;width:19px;text-align:center;top:351.65px;line-height:14px;height:14px;font-size:9.5px;color:#3c4653">17</div>
<div class="a" style="left:0.00px;top:365.58px;width:19.50px;height:13.87px;background:#fdd865;border-bottom:1px solid #e3b04a;border-right:1px solid #e3b04a"></div>
<div class="a t" style="left:0.00px;width:19px;text-align:center;top:365.51px;line-height:14px;height:14px;font-size:9.5px;color:#3c4653">18</div>
<div class="a" style="left:0.00px;top:379.45px;width:19.50px;height:13.87px;background:#fdd865;border-bottom:1px solid #e3b04a;border-right:1px solid #e3b04a"></div>
<div class="a t" style="left:0.00px;width:19px;text-align:center;top:379.38px;line-height:14px;height:14px;font-size:9.5px;color:#3c4653">19</div>
<div class="a" style="left:0.00px;top:393.32px;width:19.50px;height:13.87px;background:#fdd865;border-bottom:1px solid #e3b04a;border-right:1px solid #e3b04a"></div>
<div class="a t" style="left:0.00px;width:19px;text-align:center;top:393.25px;line-height:14px;height:14px;font-size:9.5px;color:#3c4653">20</div>
<div class="a" style="left:0.00px;top:407.19px;width:19.50px;height:13.87px;background:#fdd865;border-bottom:1px solid #e3b04a;border-right:1px solid #e3b04a"></div>
<div class="a t" style="left:0.00px;width:19px;text-align:center;top:407.12px;line-height:14px;height:14px;font-size:9.5px;color:#3c4653">21</div>
<div class="a" style="left:0.00px;top:421.06px;width:19.50px;height:13.87px;background:#fdd865;border-bottom:1px solid #e3b04a;border-right:1px solid #e3b04a"></div>
<div class="a t" style="left:0.00px;width:19px;text-align:center;top:421.00px;line-height:14px;height:14px;font-size:9.5px;color:#3c4653">22</div>
<div class="a" style="left:0.00px;top:434.93px;width:19.50px;height:13.87px;background:#fdd865;border-bottom:1px solid #e3b04a;border-right:1px solid #e3b04a"></div>
<div class="a t" style="left:0.00px;width:19px;text-align:center;top:434.86px;line-height:14px;height:14px;font-size:9.5px;color:#3c4653">23</div>
<div class="a" style="left:0.00px;top:448.80px;width:19.50px;height:13.87px;background:#fdd865;border-bottom:1px solid #e3b04a;border-right:1px solid #e3b04a"></div>
<div class="a t" style="left:0.00px;width:19px;text-align:center;top:448.73px;line-height:14px;height:14px;font-size:9.5px;color:#3c4653">24</div>
<div class="a" style="left:0.00px;top:462.67px;width:19.50px;height:13.87px;background:#fdd865;border-bottom:1px solid #e3b04a;border-right:1px solid #e3b04a"></div>
<div class="a t" style="left:0.00px;width:19px;text-align:center;top:462.60px;line-height:14px;height:14px;font-size:9.5px;color:#3c4653">25</div>
<div class="a" style="left:0.00px;top:476.54px;width:19.50px;height:13.87px;background:#fdd865;border-bottom:1px solid #e3b04a;border-right:1px solid #e3b04a"></div>
<div class="a t" style="left:0.00px;width:19px;text-align:center;top:476.47px;line-height:14px;height:14px;font-size:9.5px;color:#3c4653">26</div>
<div class="a" style="left:0.00px;top:490.41px;width:19.50px;height:13.87px;background:#e4e7eb;border-bottom:1px solid #b4b9c1;border-right:1px solid #b4b9c1"></div>
<div class="a t" style="left:0.00px;width:19px;text-align:center;top:490.34px;line-height:14px;height:14px;font-size:9.5px;color:#3c4653">27</div>
<div class="a" style="left:0.00px;top:504.28px;width:19.50px;height:8.72px;background:#e4e7eb;border-bottom:1px solid #b4b9c1;border-right:1px solid #b4b9c1"></div>
<div class="a t" style="left:0;width:19px;text-align:center;top:504.78px;height:8.22px;overflow:hidden;line-height:14px;font-size:9.5px;color:#3c4653">28</div>
<div class="a t b cell" style="left:67.40px;top:212.94px;line-height:14px;height:14px;font-size:9.8px;letter-spacing:-0.658px;">Accessories</div>
<div class="a t cell" style="left:74.60px;top:226.81px;line-height:14px;height:14px;font-size:9.8px;letter-spacing:-0.330px;">Bike Racks</div>
<div class="a t cell" style="left:74.60px;top:240.69px;line-height:14px;height:14px;font-size:9.8px;letter-spacing:-0.089px;">Bike Stands</div>
<div class="a t cell" style="left:74.60px;top:254.56px;line-height:14px;height:14px;font-size:9.8px;letter-spacing:-0.027px;">Bottles and Cages</div>
<div class="a t cell" style="left:74.60px;top:268.43px;line-height:14px;height:14px;font-size:9.8px;letter-spacing:-0.115px;">Cleaners</div>
<div class="a t cell" style="left:74.60px;top:282.30px;line-height:14px;height:14px;font-size:9.8px;letter-spacing:-0.108px;">Fenders</div>
<div class="a t cell" style="left:74.60px;top:296.17px;line-height:14px;height:14px;font-size:9.8px;letter-spacing:0.023px;">Helmets</div>
<div class="a t cell" style="left:74.60px;top:310.04px;line-height:14px;height:14px;font-size:9.8px;letter-spacing:-0.036px;">Hydration Packs</div>
<div class="a t cell" style="left:74.60px;top:323.91px;line-height:14px;height:14px;font-size:9.8px;letter-spacing:0.034px;">Tires and Tubes</div>
<div class="a t b cell" style="left:67.40px;top:337.78px;line-height:14px;height:14px;font-size:9.8px;letter-spacing:-0.691px;">Bikes</div>
<div class="a t cell" style="left:74.60px;top:351.65px;line-height:14px;height:14px;font-size:9.8px;letter-spacing:0.194px;">Mountain Bikes</div>
<div class="a t cell" style="left:74.60px;top:365.51px;line-height:14px;height:14px;font-size:9.8px;letter-spacing:-0.171px;">Road Bikes</div>
<div class="a t cell" style="left:74.60px;top:379.38px;line-height:14px;height:14px;font-size:9.8px;letter-spacing:0.061px;">Touring Bikes</div>
<div class="a t b cell" style="left:67.40px;top:393.25px;line-height:14px;height:14px;font-size:9.8px;letter-spacing:-0.290px;">Clothing</div>
<div class="a t cell" style="left:74.60px;top:407.12px;line-height:14px;height:14px;font-size:9.8px;letter-spacing:-0.469px;">Caps</div>
<div class="a t cell" style="left:74.60px;top:421.00px;line-height:14px;height:14px;font-size:9.8px;letter-spacing:-0.167px;">Gloves</div>
<div class="a t cell" style="left:74.60px;top:434.86px;line-height:14px;height:14px;font-size:9.8px;letter-spacing:-0.538px;">Jerseys</div>
<div class="a t cell" style="left:74.60px;top:448.73px;line-height:14px;height:14px;font-size:9.8px;letter-spacing:-0.088px;">Shorts</div>
<div class="a t cell" style="left:74.60px;top:462.60px;line-height:14px;height:14px;font-size:9.8px;letter-spacing:-0.658px;">Socks</div>
<div class="a t cell" style="left:74.60px;top:476.47px;line-height:14px;height:14px;font-size:9.8px;letter-spacing:-0.194px;">Vests</div>
<div class="a t b cell" style="right:840.60px;top:199.08px;line-height:14px;height:14px;font-size:9.8px;letter-spacing:-0.165px;">2011</div>
<div class="a t b cell" style="left:203.5px;top:199.08px;width:13px;overflow:hidden;line-height:14px;height:14px;font-size:9.8px;letter-spacing:-0.165px;">2012</div>
<div class="a t b cell" style="right:329.00px;top:199.08px;line-height:14px;height:14px;font-size:9.8px;letter-spacing:-0.165px;">2014</div>
<div class="a t b cell" style="right:283.25px;top:199.08px;line-height:14px;height:14px;font-size:9.8px;letter-spacing:-0.165px;">2015</div>
<div class="a t b cell" style="right:236.50px;top:199.08px;line-height:14px;height:14px;font-size:9.8px;letter-spacing:-0.165px;">2016</div>
<div class="a t b cell" style="right:840.60px;top:337.78px;line-height:14px;height:14px;font-size:9.8px;letter-spacing:-0.165px;">9E+06</div>
<div class="a t cell" style="right:840.60px;top:351.65px;line-height:14px;height:14px;font-size:9.8px;letter-spacing:-0.165px;">2E+06</div>
<div class="a t cell" style="right:840.60px;top:365.51px;line-height:14px;height:14px;font-size:9.8px;letter-spacing:-0.165px;">7E+06</div>
<div class="a t cell b" style="left:188px;top:212.94px;width:29px;overflow:hidden;line-height:14px;height:14px;font-size:9.8px;letter-spacing:-0.165px;">9175988</div>
<div class="a t cell b" style="left:188px;top:337.78px;width:29px;overflow:hidden;line-height:14px;height:14px;font-size:9.8px;letter-spacing:-0.165px;">9175988</div>
<div class="a t cell" style="left:188px;top:351.65px;width:29px;overflow:hidden;line-height:14px;height:14px;font-size:9.8px;letter-spacing:-0.165px;">2182859</div>
<div class="a t cell" style="right:799.70px;top:365.51px;line-height:14px;height:14px;font-size:9.8px;letter-spacing:-0.165px;">6993130</div>
<div class="a t cell" style="right:752.75px;top:365.51px;line-height:14px;height:14px;font-size:9.8px;letter-spacing:-0.165px;">4836352</div>
<div class="a t cell" style="right:706.50px;top:365.51px;line-height:14px;height:14px;font-size:9.8px;letter-spacing:-0.165px;">3017127</div>
<div class="a t cell" style="right:659.50px;top:365.51px;line-height:14px;height:14px;font-size:9.8px;letter-spacing:-0.165px;">7279822</div>
<div class="a t cell" style="right:614.00px;top:365.51px;line-height:14px;height:14px;font-size:9.8px;letter-spacing:-0.165px;">4470012</div>
<div class="a t cell" style="right:752.75px;top:379.38px;line-height:14px;height:14px;font-size:9.8px;letter-spacing:-0.165px;">1289594</div>
<div class="a t cell" style="right:706.50px;top:379.38px;line-height:14px;height:14px;font-size:9.8px;letter-spacing:-0.165px;">1611090</div>
<div class="a t cell" style="right:659.50px;top:379.38px;line-height:14px;height:14px;font-size:9.8px;letter-spacing:-0.165px;">1937737</div>
<div class="a t cell" style="right:614.00px;top:379.38px;line-height:14px;height:14px;font-size:9.8px;letter-spacing:-0.165px;">2457126</div>
<div class="a t b cell" style="right:752.75px;top:393.25px;line-height:14px;height:14px;font-size:9.8px;letter-spacing:-0.165px;">1997035</div>
<div class="a t b cell" style="right:706.50px;top:393.25px;line-height:14px;height:14px;font-size:9.8px;letter-spacing:-0.165px;">2247889</div>
<div class="a t b cell" style="right:659.50px;top:393.25px;line-height:14px;height:14px;font-size:9.8px;letter-spacing:-0.165px;">1938954</div>
<div class="a t b cell" style="right:614.00px;top:393.25px;line-height:14px;height:14px;font-size:9.8px;letter-spacing:-0.165px;">2187004</div>
<div class="a t cell" style="right:752.75px;top:407.12px;line-height:14px;height:14px;font-size:9.8px;letter-spacing:-0.165px;">117068</div>
<div class="a t cell" style="right:706.50px;top:407.12px;line-height:14px;height:14px;font-size:9.8px;letter-spacing:-0.165px;">161372</div>
<div class="a t cell" style="right:659.50px;top:407.12px;line-height:14px;height:14px;font-size:9.8px;letter-spacing:-0.165px;">113612</div>
<div class="a t cell" style="right:614.00px;top:407.12px;line-height:14px;height:14px;font-size:9.8px;letter-spacing:-0.165px;">156725</div>
<div class="a t cell" style="right:752.75px;top:421.00px;line-height:14px;height:14px;font-size:9.8px;letter-spacing:-0.165px;">191818</div>
<div class="a t cell" style="right:706.50px;top:421.00px;line-height:14px;height:14px;font-size:9.8px;letter-spacing:-0.165px;">250571</div>
<div class="a t cell" style="right:659.50px;top:421.00px;line-height:14px;height:14px;font-size:9.8px;letter-spacing:-0.165px;">185339</div>
<div class="a t cell" style="right:614.00px;top:421.00px;line-height:14px;height:14px;font-size:9.8px;letter-spacing:-0.165px;">243691</div>
<div class="a t cell" style="right:752.75px;top:434.86px;line-height:14px;height:14px;font-size:9.8px;letter-spacing:-0.165px;">956093</div>
<div class="a t cell" style="right:706.50px;top:434.86px;line-height:14px;height:14px;font-size:9.8px;letter-spacing:-0.165px;">1129894</div>
<div class="a t cell" style="right:659.50px;top:434.86px;line-height:14px;height:14px;font-size:9.8px;letter-spacing:-0.165px;">927556</div>
<div class="a t cell" style="right:614.00px;top:434.86px;line-height:14px;height:14px;font-size:9.8px;letter-spacing:-0.165px;">1100199</div>
<div class="a t cell" style="right:752.75px;top:448.73px;line-height:14px;height:14px;font-size:9.8px;letter-spacing:-0.165px;">447464</div>
<div class="a t cell" style="right:706.50px;top:448.73px;line-height:14px;height:14px;font-size:9.8px;letter-spacing:-0.165px;">435603</div>
<div class="a t cell" style="right:659.50px;top:448.73px;line-height:14px;height:14px;font-size:9.8px;letter-spacing:-0.165px;">433788</div>
<div class="a t cell" style="right:614.00px;top:448.73px;line-height:14px;height:14px;font-size:9.8px;letter-spacing:-0.165px;">423855</div>
<div class="a t cell" style="right:752.75px;top:462.60px;line-height:14px;height:14px;font-size:9.8px;letter-spacing:-0.165px;">32888</div>
<div class="a t cell" style="right:706.50px;top:462.60px;line-height:14px;height:14px;font-size:9.8px;letter-spacing:-0.165px;">41825</div>
<div class="a t cell" style="right:659.50px;top:462.60px;line-height:14px;height:14px;font-size:9.8px;letter-spacing:-0.165px;">31942</div>
<div class="a t cell" style="right:614.00px;top:462.60px;line-height:14px;height:14px;font-size:9.8px;letter-spacing:-0.165px;">40516</div>
<div class="a t cell" style="right:752.75px;top:476.47px;line-height:14px;height:14px;font-size:9.8px;letter-spacing:-0.165px;">251704</div>
<div class="a t cell" style="right:706.50px;top:476.47px;line-height:14px;height:14px;font-size:9.8px;letter-spacing:-0.165px;">228624</div>
<div class="a t cell" style="right:659.50px;top:476.47px;line-height:14px;height:14px;font-size:9.8px;letter-spacing:-0.165px;">246717</div>
<div class="a t cell" style="right:614.00px;top:476.47px;line-height:14px;height:14px;font-size:9.8px;letter-spacing:-0.165px;">222018</div>
<svg class="a" style="left:367.30px;top:393.62px;" width="4" height="4" viewBox="0 0 4 4"><polygon points="0,0 3.5,0 0,3.5" fill="#1e8a3c"/></svg>
<svg class="a" style="left:0;top:0" width="520" height="520" viewBox="0 0 520 520"><g fill="none" stroke="#5d8bc2" stroke-width="0.75"><polyline points="418.0,368.4 427.0,368.4 436.0,373.3 445.0,377.4 454.0,367.8 463.0,374.2"/><polyline points="436.0,391.3 445.0,388.7 454.0,386.0 463.0,381.6"/><polyline points="436.0,403.4 445.0,395.5 454.0,405.2 463.0,397.4"/><polyline points="436.0,418.4 445.0,409.4 454.0,419.1 463.0,410.3"/><polyline points="436.0,432.0 445.0,423.3 454.0,432.9 463.0,424.3"/><polyline points="436.0,445.4 445.0,437.1 454.0,446.8 463.0,438.5"/><polyline points="436.0,451.0 445.0,455.9 454.0,456.6 463.0,460.7"/><polyline points="436.0,473.6 445.0,464.9 454.0,474.5 463.0,466.2"/><polyline points="436.0,478.7 445.0,486.3 454.0,480.4 463.0,488.4"/></g></svg>
<div class="a t cell" style="left:478.5px;top:365.51px;width:36.0px;overflow:hidden;line-height:14px;height:14px;font-size:9.8px;letter-spacing:-0.171px;">Road Bikes</div>
<div class="a t cell" style="left:478.5px;top:379.38px;width:36.0px;overflow:hidden;line-height:14px;height:14px;font-size:9.8px;letter-spacing:0.061px;">Touring Bikes</div>
<div class="a t cell b" style="left:471.3px;top:393.25px;width:43.2px;overflow:hidden;line-height:14px;height:14px;font-size:9.8px;letter-spacing:-0.290px;">Clothing</div>
<div class="a t cell" style="left:478.5px;top:407.12px;width:36.0px;overflow:hidden;line-height:14px;height:14px;font-size:9.8px;letter-spacing:-0.469px;">Caps</div>
<div class="a t cell" style="left:478.5px;top:421.00px;width:36.0px;overflow:hidden;line-height:14px;height:14px;font-size:9.8px;letter-spacing:-0.167px;">Gloves</div>
<div class="a t cell" style="left:478.5px;top:434.86px;width:36.0px;overflow:hidden;line-height:14px;height:14px;font-size:9.8px;letter-spacing:-0.538px;">Jerseys</div>
<div class="a t cell" style="left:478.5px;top:448.73px;width:36.0px;overflow:hidden;line-height:14px;height:14px;font-size:9.8px;letter-spacing:-0.088px;">Shorts</div>
<div class="a t cell" style="left:478.5px;top:462.60px;width:36.0px;overflow:hidden;line-height:14px;height:14px;font-size:9.8px;letter-spacing:-0.658px;">Socks</div>
<div class="a t cell" style="left:478.5px;top:476.47px;width:36.0px;overflow:hidden;line-height:14px;height:14px;font-size:9.8px;letter-spacing:-0.194px;">Vests</div>
<div class="a t b cell" style="right:420.30px;top:365.51px;line-height:14px;height:14px;font-size:9.8px;letter-spacing:-0.34px">3%</div>
<div class="a t b cell" style="right:374.00px;top:365.51px;line-height:14px;height:14px;font-size:9.8px;letter-spacing:-0.34px">-31%</div>
<div class="a t b cell" style="right:420.30px;top:379.38px;line-height:14px;height:14px;font-size:9.8px;letter-spacing:-0.34px">0%</div>
<div class="a t b cell" style="right:374.00px;top:379.38px;line-height:14px;height:14px;font-size:9.8px;letter-spacing:-0.34px">0%</div>
<div class="a t b cell" style="right:420.30px;top:393.25px;line-height:14px;height:14px;font-size:9.8px;letter-spacing:-0.34px">0%</div>
<div class="a t b cell" style="right:374.00px;top:393.25px;line-height:14px;height:14px;font-size:9.8px;letter-spacing:-0.34px">0%</div>
<div class="a t b cell" style="right:420.30px;top:407.12px;line-height:14px;height:14px;font-size:9.8px;letter-spacing:-0.34px">0%</div>
<div class="a t b cell" style="right:374.00px;top:407.12px;line-height:14px;height:14px;font-size:9.8px;letter-spacing:-0.34px">0%</div>
<div class="a t b cell" style="right:420.30px;top:421.00px;line-height:14px;height:14px;font-size:9.8px;letter-spacing:-0.34px">0%</div>
<div class="a t b cell" style="right:374.00px;top:421.00px;line-height:14px;height:14px;font-size:9.8px;letter-spacing:-0.34px">0%</div>
<div class="a t b cell" style="right:420.30px;top:434.86px;line-height:14px;height:14px;font-size:9.8px;letter-spacing:-0.34px">0%</div>
<div class="a t b cell" style="right:374.00px;top:434.86px;line-height:14px;height:14px;font-size:9.8px;letter-spacing:-0.34px">0%</div>
<div class="a t b cell" style="right:420.30px;top:448.73px;line-height:14px;height:14px;font-size:9.8px;letter-spacing:-0.34px">0%</div>
<div class="a t b cell" style="right:374.00px;top:448.73px;line-height:14px;height:14px;font-size:9.8px;letter-spacing:-0.34px">0%</div>
<div class="a t b cell" style="right:420.30px;top:462.60px;line-height:14px;height:14px;font-size:9.8px;letter-spacing:-0.34px">0%</div>
<div class="a t b cell" style="right:374.00px;top:462.60px;line-height:14px;height:14px;font-size:9.8px;letter-spacing:-0.34px">0%</div>
<div class="a t b cell" style="right:420.30px;top:476.47px;line-height:14px;height:14px;font-size:9.8px;letter-spacing:-0.34px">0%</div>
<div class="a t b cell" style="right:374.00px;top:476.47px;line-height:14px;height:14px;font-size:9.8px;letter-spacing:-0.34px">0%</div>
<div class="a t b cell" style="right:329.00px;top:212.94px;line-height:14px;height:14px;font-size:9.8px;letter-spacing:-0.34px">27%</div>
<div class="a t b cell" style="right:283.25px;top:212.94px;line-height:14px;height:14px;font-size:9.8px;letter-spacing:-0.34px">-23%</div>
<div class="a t b cell" style="right:236.50px;top:212.94px;line-height:14px;height:14px;font-size:9.8px;letter-spacing:-0.34px">26%</div>
<div class="a t b cell" style="right:329.00px;top:226.81px;line-height:14px;height:14px;font-size:9.8px;letter-spacing:-0.34px">36%</div>
<div class="a t b cell" style="right:283.25px;top:226.81px;line-height:14px;height:14px;font-size:9.8px;letter-spacing:-0.34px">-30%</div>
<div class="a t b cell" style="right:236.50px;top:226.81px;line-height:14px;height:14px;font-size:9.8px;letter-spacing:-0.34px">34%</div>
<div class="a t b cell" style="right:329.00px;top:240.69px;line-height:14px;height:14px;font-size:9.8px;letter-spacing:-0.34px">-13%</div>
<div class="a t b cell" style="right:283.25px;top:240.69px;line-height:14px;height:14px;font-size:9.8px;letter-spacing:-0.34px">7%</div>
<div class="a t b cell" style="right:236.50px;top:240.69px;line-height:14px;height:14px;font-size:9.8px;letter-spacing:-0.34px">-14%</div>
<div class="a t b cell" style="right:329.00px;top:254.56px;line-height:14px;height:14px;font-size:9.8px;letter-spacing:-0.34px">44%</div>
<div class="a t b cell" style="right:283.25px;top:254.56px;line-height:14px;height:14px;font-size:9.8px;letter-spacing:-0.34px">-32%</div>
<div class="a t b cell" style="right:236.50px;top:254.56px;line-height:14px;height:14px;font-size:9.8px;letter-spacing:-0.34px">44%</div>
<div class="a t b cell" style="right:329.00px;top:268.43px;line-height:14px;height:14px;font-size:9.8px;letter-spacing:-0.34px">35%</div>
<div class="a t b cell" style="right:283.25px;top:268.43px;line-height:14px;height:14px;font-size:9.8px;letter-spacing:-0.34px">-28%</div>
<div class="a t b cell" style="right:236.50px;top:268.43px;line-height:14px;height:14px;font-size:9.8px;letter-spacing:-0.34px">36%</div>
<div class="a t b cell" style="right:329.00px;top:282.30px;line-height:14px;height:14px;font-size:9.8px;letter-spacing:-0.34px">22%</div>
<div class="a t b cell" style="right:283.25px;top:282.30px;line-height:14px;height:14px;font-size:9.8px;letter-spacing:-0.34px">-20%</div>
<div class="a t b cell" style="right:236.50px;top:282.30px;line-height:14px;height:14px;font-size:9.8px;letter-spacing:-0.34px">21%</div>
<div class="a t b cell" style="right:329.00px;top:296.17px;line-height:14px;height:14px;font-size:9.8px;letter-spacing:-0.34px">27%</div>
<div class="a t b cell" style="right:283.25px;top:296.17px;line-height:14px;height:14px;font-size:9.8px;letter-spacing:-0.34px">-23%</div>
<div class="a t b cell" style="right:236.50px;top:296.17px;line-height:14px;height:14px;font-size:9.8px;letter-spacing:-0.34px">26%</div>
<div class="a t b cell" style="right:329.00px;top:310.04px;line-height:14px;height:14px;font-size:9.8px;letter-spacing:-0.34px">11%</div>
<div class="a t b cell" style="right:283.25px;top:310.04px;line-height:14px;height:14px;font-size:9.8px;letter-spacing:-0.34px">-13%</div>
<div class="a t b cell" style="right:236.50px;top:310.04px;line-height:14px;height:14px;font-size:9.8px;letter-spacing:-0.34px">12%</div>
<div class="a t b cell" style="right:329.00px;top:323.91px;line-height:14px;height:14px;font-size:9.8px;letter-spacing:-0.34px">29%</div>
<div class="a t b cell" style="right:283.25px;top:323.91px;line-height:14px;height:14px;font-size:9.8px;letter-spacing:-0.34px">-25%</div>
<div class="a t b cell" style="right:236.50px;top:323.91px;line-height:14px;height:14px;font-size:9.8px;letter-spacing:-0.34px">29%</div>
<div class="a t b cell" style="right:329.00px;top:337.78px;line-height:14px;height:14px;font-size:9.8px;letter-spacing:-0.34px">-23%</div>
<div class="a t b cell" style="right:283.25px;top:337.78px;line-height:14px;height:14px;font-size:9.8px;letter-spacing:-0.34px">94%</div>
<div class="a t b cell" style="right:236.50px;top:337.78px;line-height:14px;height:14px;font-size:9.8px;letter-spacing:-0.34px">-23%</div>
<div class="a t b cell" style="right:329.00px;top:351.65px;line-height:14px;height:14px;font-size:9.8px;letter-spacing:-0.34px">-20%</div>
<div class="a t b cell" style="right:283.25px;top:351.65px;line-height:14px;height:14px;font-size:9.8px;letter-spacing:-0.34px">87%</div>
<div class="a t b cell" style="right:236.50px;top:351.65px;line-height:14px;height:14px;font-size:9.8px;letter-spacing:-0.34px">-20%</div>
<div class="a t b cell" style="right:329.00px;top:365.51px;line-height:14px;height:14px;font-size:9.8px;letter-spacing:-0.34px">-38%</div>
<div class="a t b cell" style="right:283.25px;top:365.51px;line-height:14px;height:14px;font-size:9.8px;letter-spacing:-0.34px">141%</div>
<div class="a t b cell" style="right:236.50px;top:365.51px;line-height:14px;height:14px;font-size:9.8px;letter-spacing:-0.34px">-39%</div>
<div class="a t b cell" style="right:329.00px;top:379.38px;line-height:14px;height:14px;font-size:9.8px;letter-spacing:-0.34px">25%</div>
<div class="a t b cell" style="right:283.25px;top:379.38px;line-height:14px;height:14px;font-size:9.8px;letter-spacing:-0.34px">20%</div>
<div class="a t b cell" style="right:236.50px;top:379.38px;line-height:14px;height:14px;font-size:9.8px;letter-spacing:-0.34px">27%</div>
<div class="a t b cell" style="right:329.00px;top:393.25px;line-height:14px;height:14px;font-size:9.8px;letter-spacing:-0.34px">13%</div>
<div class="a t b cell" style="right:283.25px;top:393.25px;line-height:14px;height:14px;font-size:9.8px;letter-spacing:-0.34px">-14%</div>
<div class="a t b cell" style="right:236.50px;top:393.25px;line-height:14px;height:14px;font-size:9.8px;letter-spacing:-0.34px">13%</div>
<div class="a t b cell" style="right:329.00px;top:407.12px;line-height:14px;height:14px;font-size:9.8px;letter-spacing:-0.34px">38%</div>
<div class="a t b cell" style="right:283.25px;top:407.12px;line-height:14px;height:14px;font-size:9.8px;letter-spacing:-0.34px">-30%</div>
<div class="a t b cell" style="right:236.50px;top:407.12px;line-height:14px;height:14px;font-size:9.8px;letter-spacing:-0.34px">38%</div>
<div class="a t b cell" style="right:329.00px;top:421.00px;line-height:14px;height:14px;font-size:9.8px;letter-spacing:-0.34px">31%</div>
<div class="a t b cell" style="right:283.25px;top:421.00px;line-height:14px;height:14px;font-size:9.8px;letter-spacing:-0.34px">-26%</div>
<div class="a t b cell" style="right:236.50px;top:421.00px;line-height:14px;height:14px;font-size:9.8px;letter-spacing:-0.34px">31%</div>
<div class="a t b cell" style="right:329.00px;top:434.86px;line-height:14px;height:14px;font-size:9.8px;letter-spacing:-0.34px">18%</div>
<div class="a t b cell" style="right:283.25px;top:434.86px;line-height:14px;height:14px;font-size:9.8px;letter-spacing:-0.34px">-18%</div>
<div class="a t b cell" style="right:236.50px;top:434.86px;line-height:14px;height:14px;font-size:9.8px;letter-spacing:-0.34px">19%</div>
<div class="a t b cell" style="right:329.00px;top:448.73px;line-height:14px;height:14px;font-size:9.8px;letter-spacing:-0.34px">-3%</div>
<div class="a t b cell" style="right:283.25px;top:448.73px;line-height:14px;height:14px;font-size:9.8px;letter-spacing:-0.34px">0%</div>
<div class="a t b cell" style="right:236.50px;top:448.73px;line-height:14px;height:14px;font-size:9.8px;letter-spacing:-0.34px">-2%</div>
<div class="a t b cell" style="right:329.00px;top:462.60px;line-height:14px;height:14px;font-size:9.8px;letter-spacing:-0.34px">27%</div>
<div class="a t b cell" style="right:283.25px;top:462.60px;line-height:14px;height:14px;font-size:9.8px;letter-spacing:-0.34px">-24%</div>
<div class="a t b cell" style="right:236.50px;top:462.60px;line-height:14px;height:14px;font-size:9.8px;letter-spacing:-0.34px">27%</div>
<div class="a t b cell" style="right:329.00px;top:476.47px;line-height:14px;height:14px;font-size:9.8px;letter-spacing:-0.34px">-9%</div>
<div class="a t b cell" style="right:283.25px;top:476.47px;line-height:14px;height:14px;font-size:9.8px;letter-spacing:-0.34px">8%</div>
<div class="a t b cell" style="right:236.50px;top:476.47px;line-height:14px;height:14px;font-size:9.8px;letter-spacing:-0.34px">-10%</div>
<div class="a" style="left:514.30px;top:211.51px;width:276.30px;height:278.40px;border:1.6px solid #1a1a1a"></div>
<div class="a" style="left:1009.00px;top:157.00px;width:15.00px;height:356.00px;background:#e6e9ee;border-left:1px solid #cfd4db"></div>
<div class="a" style="left:1010.50px;top:158.00px;width:12.00px;height:6.00px;background:#fff;border:1px solid #8e959f;border-radius:1px"></div>
<svg class="a" style="left:1011.50px;top:168.00px;" width="9" height="5" viewBox="0 0 9 5"><polygon points="4.5,0 9,5 0,5" fill="#3f3f3f"/></svg>
<div class="a" style="left:1009.50px;top:191.00px;width:12.00px;height:112.00px;background:linear-gradient(90deg,#f4f5f7,#e4e7eb);border:1px solid #b6bcc6;border-radius:1px"></div>
<div class="a" style="left:1013.00px;top:244.00px;width:4.50px;height:1.00px;background:#9aa1ab"></div>
<div class="a" style="left:1013.00px;top:246.00px;width:4.50px;height:1.00px;background:#9aa1ab"></div>
<div class="a" style="left:1013.00px;top:248.00px;width:4.50px;height:1.00px;background:#9aa1ab"></div>
<svg class="a" style="left:1011.50px;top:503.50px;" width="9" height="5" viewBox="0 0 9 5"><polygon points="0,0 9,0 4.5,5" fill="#3f3f3f"/></svg>
<div class="a" style="left:0.00px;top:513.00px;width:1010.00px;height:14.00px;background:#dde1e7;border-top:1px solid #b4bac3"></div>
<div class="a" style="left:1009.00px;top:513.00px;width:15.00px;height:14.00px;background:#e6e9ee"></div>
<svg class="a" style="left:6.20px;top:517.20px;" width="4" height="6" viewBox="0 0 4 6"><polygon points="3.6,0 0,3 3.6,6" fill="#4a4f57"/></svg>
<div class="a" style="left:4.60px;top:517.20px;width:1.10px;height:6.00px;background:#4a4f57"></div>
<svg class="a" style="left:18.50px;top:517.20px;" width="4" height="6" viewBox="0 0 4 6"><polygon points="3.6,0 0,3 3.6,6" fill="#4a4f57"/></svg>
<svg class="a" style="left:30.50px;top:517.20px;" width="4" height="6" viewBox="0 0 4 6"><polygon points="0,0 3.6,3 0,6" fill="#4a4f57"/></svg>
<svg class="a" style="left:42.00px;top:517.20px;" width="4" height="6" viewBox="0 0 4 6"><polygon points="0,0 3.6,3 0,6" fill="#4a4f57"/></svg>
<div class="a" style="left:46.20px;top:517.20px;width:1.10px;height:6.00px;background:#4a4f57"></div>
<div class="a t" style="left:33.75px;width:70px;text-align:center;top:513.20px;line-height:14px;height:14px;font-size:9.5px;color:#3a3a3a">Data</div>
<div class="a t" style="left:67.75px;width:70px;text-align:center;top:513.20px;line-height:14px;height:14px;font-size:9.5px;color:#3a3a3a">Pivot</div>
<div class="a t" style="left:115.75px;width:70px;text-align:center;top:513.20px;line-height:14px;height:14px;font-size:9.5px;color:#3a3a3a">Dashboard</div>
<div class="a t" style="left:169.50px;width:70px;text-align:center;top:513.20px;line-height:14px;height:14px;font-size:9.5px;color:#3a3a3a">Details</div>
<svg class="a" style="left:0.00px;top:513.00px;" width="300" height="14" viewBox="0 0 300 14"><path d="M51.5,13 L57.0,1.5" stroke="#9aa1ab" stroke-width="0.9" fill="none"/><path d="M84.5,13 L90.0,1.5" stroke="#9aa1ab" stroke-width="0.9" fill="none"/><path d="M118.5,13 L124.0,1.5" stroke="#9aa1ab" stroke-width="0.9" fill="none"/><path d="M181.5,13 L187.0,1.5" stroke="#9aa1ab" stroke-width="0.9" fill="none"/></svg>
<svg class="a" style="left:222.00px;top:512.50px;" width="80" height="14.5" viewBox="0 0 80 14.5"><path d="M3,0.5 L55.2,0.5 L50.8,13 Q50.4,14 49,14 L5.6,14 Q4.4,14 4.2,13 Z" fill="#fff" stroke="#9aa1ab" stroke-width="0.8"/><rect x="3.4" y="0" width="51.4" height="1.3" fill="#fff"/><path d="M51,14 L55.5,1.2 M69,14 L74.5,1.2 M51,14 H69" stroke="#9aa1ab" stroke-width="0.8" fill="none"/></svg>
<div class="a t b" style="left:231.00px;top:513.80px;line-height:14px;height:14px;font-size:10px;color:#3a3a3a;letter-spacing:0.333px;">Growth</div>
<svg class="a" style="left:277.00px;top:514.00px;" width="13" height="12" viewBox="0 0 13 12"><rect x="3.5" y="2.6" width="8" height="6.4" fill="#dbe6f4" stroke="#5f7da8" stroke-width="0.9"/><path d="M5.5,10.4H9.5" stroke="#5f7da8" stroke-width="0.9"/><circle cx="2.6" cy="2.6" r="2" fill="#f4b73a"/><circle cx="2.6" cy="2.6" r="0.8" fill="#fff3c4"/></svg>
<div class="a" style="left:606.00px;top:514.00px;width:5.00px;height:12.50px;background:#fff;border:1px solid #8e959f;border-radius:1px"></div>
<svg class="a" style="left:615.00px;top:516.50px;" width="5" height="8" viewBox="0 0 5 8"><polygon points="5,0 0,4 5,8" fill="#3f3f3f"/></svg>
<div class="a" style="left:626.00px;top:514.00px;width:343.50px;height:12.50px;background:linear-gradient(#f3f4f6,#e3e6ea);border:1px solid #b9bfc8;border-radius:1px"></div>
<div class="a" style="left:795.00px;top:518.50px;width:1.00px;height:4.00px;background:#a5abb5"></div>
<div class="a" style="left:797.00px;top:518.50px;width:1.00px;height:4.00px;background:#a5abb5"></div>
<svg class="a" style="left:994.00px;top:516.50px;" width="5" height="8" viewBox="0 0 5 8"><polygon points="0,0 5,4 0,8" fill="#3f3f3f"/></svg>
<div class="a" style="left:1003.00px;top:514.00px;width:5.00px;height:12.50px;background:#fff;border:1px solid #8e959f;border-radius:1px"></div>
<div class="a" style="left:0.00px;top:527.00px;width:1024.00px;height:17.00px;background:linear-gradient(#dfe3e9,#cfd4db 50%,#c5cad2);border-top:1px solid #eef0f3"></div>
<div class="a t" style="left:4.50px;top:528.60px;line-height:14px;height:14px;font-size:8.3px;color:#444">Ready</div>
<div class="a" style="left:32.00px;top:529.00px;width:1.00px;height:13.00px;background:#aab0ba"></div>
<div class="a t" style="left:688.00px;top:528.60px;line-height:14px;height:14px;font-size:8.3px;color:#444">Average: 6%</div>
<div class="a t" style="left:745.00px;top:528.60px;line-height:14px;height:14px;font-size:8.3px;color:#444">Count: 100</div>
<div class="a t" style="left:794.00px;top:528.60px;line-height:14px;height:14px;font-size:8.3px;color:#444">Sum: 594%</div>
<div class="a" style="left:843.00px;top:529.00px;width:1.00px;height:13.00px;background:#aab0ba"></div>
<div class="a" style="left:846.00px;top:528.50px;width:13.50px;height:13.50px;background:#fde08a;border:1px solid #e5a936;border-radius:1.5px"></div>
<svg class="a" style="left:848.20px;top:531.00px;" width="9" height="9" viewBox="0 0 9 9"><rect x="0.5" y="0.5" width="8" height="8" fill="#fff" stroke="#555" stroke-width="0.9"/><path d="M0.5,3.2H8.5M0.5,5.9H8.5M3.2,0.5V8.5M5.9,0.5V8.5" stroke="#555" stroke-width="0.7"/></svg>
<svg class="a" style="left:862.50px;top:530.50px;" width="11" height="10" viewBox="0 0 11 10"><rect x="0.5" y="0.5" width="10" height="9" fill="#e9ebee" stroke="#555" stroke-width="0.9"/><rect x="2.8" y="2.3" width="5.4" height="5.4" fill="#fff" stroke="#555" stroke-width="0.8"/></svg>
<svg class="a" style="left:877.00px;top:530.50px;" width="11" height="10" viewBox="0 0 11 10"><rect x="0.5" y="0.5" width="10" height="9" fill="#fff" stroke="#555" stroke-width="0.9"/><path d="M0.5,5.5H10.5M4.5,0.5V5.5" stroke="#555" stroke-width="0.9"/><rect x="1" y="1" width="3.2" height="4" fill="#b8bdc6"/></svg>
<div class="a t" style="left:895.50px;top:528.60px;line-height:14px;height:14px;font-size:8.3px;color:#444">90%</div>
<svg class="a" style="left:916.00px;top:528.80px;" width="12.6" height="12.6" viewBox="0 0 12.6 12.6"><circle cx="6.3" cy="6.3" r="5.6" fill="#f4f5f7" stroke="#8b929c" stroke-width="0.9"/><rect x="3.2" y="5.3" width="5.6" height="1.5" fill="#555"/></svg>
<div class="a" style="left:930.00px;top:535.00px;width:80.00px;height:1.00px;background:#b3b8c0"></div>
<div class="a" style="left:930.00px;top:536.00px;width:80.00px;height:1.00px;background:#f1f3f5"></div>
<svg class="a" style="left:961.50px;top:529.50px;" width="8" height="11" viewBox="0 0 8 11"><path d="M0.6,0.6H7.4V7L4,10.4L0.6,7Z" fill="#f1f2f4" stroke="#777e88" stroke-width="0.9"/></svg>
<svg class="a" style="left:1008.80px;top:528.80px;" width="12.6" height="12.6" viewBox="0 0 12.6 12.6"><circle cx="6.3" cy="6.3" r="5.6" fill="#f4f5f7" stroke="#8b929c" stroke-width="0.9"/><rect x="3.2" y="5.3" width="5.6" height="1.5" fill="#555"/><rect x="5.25" y="3.2" width="1.5" height="5.6" fill="#555"/></svg>
<div class="a" style="left:216.50px;top:44.30px;width:441.30px;height:321.60px;background:#f0f0f0;border:1px solid #a6a6a6;box-shadow:0 0 4px rgba(0,0,0,0.12)"></div>
<div class="a" style="left:218.00px;top:45.50px;width:438.50px;height:18.70px;background:#fff"></div>
<div class="a t" style="left:219.30px;top:48.00px;line-height:14px;height:14px;font-size:9.5px;color:#111">New Formatting Rule</div>
<div class="a t" style="left:596.50px;width:10px;text-align:center;top:47.30px;line-height:14px;height:14px;font-size:10.5px;color:#333">?</div>
<svg class="a" style="left:634.00px;top:49.50px;" width="10" height="10" viewBox="0 0 10 10"><path d="M0.8,0.8 L9,9 M9,0.8 L0.8,9" stroke="#333" stroke-width="0.9" fill="none"/></svg>
<div class="a t dlg" style="left:222.50px;top:70.50px;line-height:14px;height:14px;font-size:8.35px;color:#111"><u>S</u>elect a Rule Type:</div>
<div class="a" style="left:222.50px;top:85.40px;width:429.50px;height:78.60px;background:#fff;border:1px solid #7f7f7f"></div>
<div class="a" style="left:223.50px;top:86.70px;width:427.30px;height:12.20px;background:#e0e0e5"></div>
<svg class="a" style="left:227.50px;top:90.90px;" width="7" height="6" viewBox="0 0 7 6"><polygon points="0.3,0.3 6.3,2.8 0.3,5.3" fill="#111"/></svg>
<div class="a t dlg" style="left:237.50px;top:86.60px;line-height:14px;height:14px;font-size:8.35px;color:#111">Format all cells based on their values</div>
<svg class="a" style="left:227.50px;top:103.70px;" width="7" height="6" viewBox="0 0 7 6"><polygon points="0.3,0.3 6.3,2.8 0.3,5.3" fill="#111"/></svg>
<div class="a t dlg" style="left:237.50px;top:99.40px;line-height:14px;height:14px;font-size:8.35px;color:#111">Format only cells that contain</div>
<svg class="a" style="left:227.50px;top:116.50px;" width="7" height="6" viewBox="0 0 7 6"><polygon points="0.3,0.3 6.3,2.8 0.3,5.3" fill="#111"/></svg>
<div class="a t dlg" style="left:237.50px;top:112.20px;line-height:14px;height:14px;font-size:8.35px;color:#111">Format only top or bottom ranked values</div>
<svg class="a" style="left:227.50px;top:129.30px;" width="7" height="6" viewBox="0 0 7 6"><polygon points="0.3,0.3 6.3,2.8 0.3,5.3" fill="#111"/></svg>
<div class="a t dlg" style="left:237.50px;top:125.00px;line-height:14px;height:14px;font-size:8.35px;color:#111">Format only values that are above or below average</div>
<svg class="a" style="left:227.50px;top:142.10px;" width="7" height="6" viewBox="0 0 7 6"><polygon points="0.3,0.3 6.3,2.8 0.3,5.3" fill="#111"/></svg>
<div class="a t dlg" style="left:237.50px;top:137.80px;line-height:14px;height:14px;font-size:8.35px;color:#111">Format only unique or duplicate values</div>
<svg class="a" style="left:227.50px;top:154.90px;" width="7" height="6" viewBox="0 0 7 6"><polygon points="0.3,0.3 6.3,2.8 0.3,5.3" fill="#111"/></svg>
<div class="a t dlg" style="left:237.50px;top:150.60px;line-height:14px;height:14px;font-size:8.35px;color:#111">Use a formula to determine which cells to format</div>
<div class="a" style="left:224.00px;top:99.70px;width:426.50px;height:1.00px;background:#f3f3f3"></div>
<div class="a" style="left:224.00px;top:112.50px;width:426.50px;height:1.00px;background:#f3f3f3"></div>
<div class="a" style="left:224.00px;top:125.30px;width:426.50px;height:1.00px;background:#f3f3f3"></div>
<div class="a" style="left:224.00px;top:138.10px;width:426.50px;height:1.00px;background:#f3f3f3"></div>
<div class="a" style="left:224.00px;top:150.90px;width:426.50px;height:1.00px;background:#f3f3f3"></div>
<div class="a t dlg" style="left:222.50px;top:171.00px;line-height:14px;height:14px;font-size:8.35px;color:#111"><u>E</u>dit the Rule Description:</div>
<div class="a" style="left:222.50px;top:185.60px;width:429.50px;height:154.00px;background:#fff;border:1px solid #c9c9c9"></div>
<div class="a t dlg b" style="left:227.00px;top:188.80px;line-height:14px;height:14px;font-size:8.5px;color:#111">Format all cells based on their values:</div>
<div class="a t dlg" style="left:227.00px;top:201.80px;line-height:14px;height:14px;font-size:8.35px;color:#111">F<u>o</u>rmat Style:</div>
<div class="a" style="left:286.20px;top:203.60px;width:102.60px;height:14.60px;background:#fff;border:1px solid #bdbdbd"></div>
<div class="a" style="left:374.30px;top:204.60px;width:13.50px;height:12.60px;background:#e5e5e5;border-left:1px solid #cfcfcf"></div>
<svg class="a" style="left:377.80px;top:208.70px;" width="7" height="5" viewBox="0 0 7 5"><polyline points="0.6,0.8 3.5,3.8 6.4,0.8" fill="none" stroke="#555" stroke-width="0.9"/></svg>
<div class="a t dlg" style="left:288.70px;top:204.10px;line-height:14px;height:14px;font-size:8.35px;color:#111">Icon Sets</div>
<div class="a" style="left:397.00px;top:204.40px;width:88.00px;height:15.40px;background:#e1e1e1;border:1px solid #adadad"></div>
<div class="a t dlg" style="left:397.00px;width:88px;text-align:center;top:205.20px;line-height:14px;height:14px;font-size:8.35px;color:#111">Reverse Icon Or<u>d</u>er</div>
<div class="a t dlg" style="left:227.00px;top:221.80px;line-height:14px;height:14px;font-size:8.35px;color:#111">I<u>c</u>on Style:</div>
<div class="a" style="left:286.20px;top:224.40px;width:102.60px;height:17.20px;background:#e1e1e1;border:1px solid #bdbdbd"></div>
<div class="a" style="left:376.00px;top:226.00px;width:1.00px;height:14.00px;background:#a9a9a9"></div>
<svg class="a" style="left:286.20px;top:224.40px;" width="103" height="17.2" viewBox="0 0 103 17.2"><g transform="rotate(180 6.300000000000011 8.7)"><path d="M6.30,4.78 L9.94,8.49 L7.70,8.49 L7.70,12.62 L4.90,12.62 L4.90,8.49 L2.66,8.49 Z" fill="#ee6a6a" stroke="#c03535" stroke-width="0.49" stroke-linejoin="round"/></g><g transform="rotate(90 17.30000000000001 8.7)"><path d="M17.30,4.78 L20.94,8.49 L18.70,8.49 L18.70,12.62 L15.90,12.62 L15.90,8.49 L13.66,8.49 Z" fill="#fbd24a" stroke="#d9a21c" stroke-width="0.49" stroke-linejoin="round"/></g><path d="M28.30,4.78 L31.94,8.49 L29.70,8.49 L29.70,12.62 L26.90,12.62 L26.90,8.49 L24.66,8.49 Z" fill="#5cb860" stroke="#2f8a3c" stroke-width="0.49" stroke-linejoin="round"/><polygon points="92.2,7.2 97.6,7.2 94.9,10.4" fill="#111"/></svg>
<div class="a" style="left:397.00px;top:224.60px;width:10.00px;height:10.00px;background:#fff;border:1px solid #333"></div>
<div class="a t dlg" style="left:412.00px;top:223.00px;line-height:14px;height:14px;font-size:8.35px;color:#111;letter-spacing:0.15px">Show <u>I</u>con Only</div>
<div class="a t dlg" style="left:227.00px;top:245.00px;line-height:14px;height:14px;font-size:8.35px;color:#111">Display each icon according to these rules:</div>
<div class="a t dlg b" style="left:227.00px;top:258.80px;line-height:14px;height:14px;font-size:8.5px;color:#111">Ico<u>n</u></div>
<div class="a t dlg b" style="left:468.20px;top:258.80px;line-height:14px;height:14px;font-size:8.5px;color:#111"><u>V</u>alue</div>
<div class="a t dlg b" style="left:582.50px;top:258.80px;line-height:14px;height:14px;font-size:8.5px;color:#111"><u>T</u>ype</div>
<div class="a" style="left:227.00px;top:273.60px;width:92.50px;height:17.80px;background:#e1e1e1;border:1px solid #c2c2c2"></div>
<div class="a" style="left:306.20px;top:275.40px;width:1.00px;height:14.20px;background:#a9a9a9"></div>
<svg class="a" style="left:227.00px;top:273.60px;" width="92.5" height="17.8" viewBox="0 0 92.5 17.8"><path d="M40.00,2.85 L45.62,8.58 L42.16,8.58 L42.16,14.95 L37.84,14.95 L37.84,8.58 L34.38,8.58 Z" fill="#5cb860" stroke="#2f8a3c" stroke-width="0.76" stroke-linejoin="round"/><polygon points="82.6,7.4 88.2,7.4 85.4,10.7" fill="#111"/></svg>
<div class="a t dlg" style="left:328.00px;top:275.50px;line-height:14px;height:14px;font-size:8.35px;color:#111">when value is</div>
<div class="a" style="left:422.00px;top:273.30px;width:38.00px;height:14.90px;background:#fff;border:1px solid #bdbdbd"></div>
<div class="a" style="left:446.50px;top:274.30px;width:12.50px;height:12.90px;background:#e5e5e5;border-left:1px solid #cfcfcf"></div>
<svg class="a" style="left:450.00px;top:278.55px;" width="7" height="5" viewBox="0 0 7 5"><polyline points="0.6,0.8 3.5,3.8 6.4,0.8" fill="none" stroke="#555" stroke-width="0.9"/></svg>
<div class="a t dlg" style="left:424.50px;top:273.95px;line-height:14px;height:14px;font-size:8.35px;color:#111">&gt;=</div>
<div class="a" style="left:467.50px;top:273.30px;width:106.30px;height:18.70px;background:#fff;border:1px solid #bdbdbd"></div>
<div class="a t dlg" style="left:470.00px;top:274.20px;line-height:14px;height:14px;font-size:8.35px;color:#111">67</div>
<div class="a" style="left:559.30px;top:273.60px;width:14.50px;height:18.20px;background:#e4e4e4;border:1px solid #a0a0a0"></div>
<svg class="a" style="left:560.80px;top:275.90px;" width="12" height="14" viewBox="0 0 12 14"><rect x="0.5" y="0.5" width="10.5" height="12.6" fill="#e3ebf7" stroke="#4a73b0" stroke-width="0.8"/><rect x="0.5" y="0.5" width="10.5" height="2.8" fill="#4f7fc6"/><path d="M0.5,6.3H11M0.5,9.6H11M4,3V13M7.5,3V13" stroke="#5f86c4" stroke-width="0.9"/><path d="M4.2,3.6 L9.8,8.6 L7.3,8.8 L8.4,11.4 L7,12 L5.9,9.4 L4.2,10.9 Z" fill="#e03c31" stroke="#a82018" stroke-width="0.4"/></svg>
<div class="a" style="left:582.00px;top:273.30px;width:61.80px;height:14.90px;background:#fff;border:1px solid #bdbdbd"></div>
<div class="a" style="left:629.80px;top:274.30px;width:13.00px;height:12.90px;background:#e5e5e5;border-left:1px solid #cfcfcf"></div>
<svg class="a" style="left:633.30px;top:278.55px;" width="7" height="5" viewBox="0 0 7 5"><polyline points="0.6,0.8 3.5,3.8 6.4,0.8" fill="none" stroke="#555" stroke-width="0.9"/></svg>
<div class="a t dlg" style="left:584.50px;top:273.95px;line-height:14px;height:14px;font-size:8.35px;color:#111">Percent</div>
<div class="a" style="left:227.00px;top:295.30px;width:92.50px;height:17.80px;background:#e1e1e1;border:1px solid #c2c2c2"></div>
<div class="a" style="left:306.20px;top:297.10px;width:1.00px;height:14.20px;background:#a9a9a9"></div>
<svg class="a" style="left:227.00px;top:295.30px;" width="92.5" height="17.8" viewBox="0 0 92.5 17.8"><g transform="rotate(90 40 8.9)"><path d="M40.00,2.85 L45.62,8.58 L42.16,8.58 L42.16,14.95 L37.84,14.95 L37.84,8.58 L34.38,8.58 Z" fill="#fbd24a" stroke="#d9a21c" stroke-width="0.76" stroke-linejoin="round"/></g><polygon points="82.6,7.4 88.2,7.4 85.4,10.7" fill="#111"/></svg>
<div class="a t dlg" style="left:328.00px;top:297.20px;line-height:14px;height:14px;font-size:8.35px;color:#111">when &lt; 67 and</div>
<div class="a" style="left:422.00px;top:295.00px;width:38.00px;height:14.90px;background:#fff;border:1px solid #bdbdbd"></div>
<div class="a" style="left:446.50px;top:296.00px;width:12.50px;height:12.90px;background:#e5e5e5;border-left:1px solid #cfcfcf"></div>
<svg class="a" style="left:450.00px;top:300.25px;" width="7" height="5" viewBox="0 0 7 5"><polyline points="0.6,0.8 3.5,3.8 6.4,0.8" fill="none" stroke="#555" stroke-width="0.9"/></svg>
<div class="a t dlg" style="left:424.50px;top:295.65px;line-height:14px;height:14px;font-size:8.35px;color:#111">&gt;=</div>
<div class="a" style="left:467.50px;top:295.00px;width:106.30px;height:18.70px;background:#fff;border:1px solid #bdbdbd"></div>
<div class="a t dlg" style="left:470.00px;top:295.90px;line-height:14px;height:14px;font-size:8.35px;color:#111">33</div>
<div class="a" style="left:559.30px;top:295.30px;width:14.50px;height:18.20px;background:#e4e4e4;border:1px solid #a0a0a0"></div>
<svg class="a" style="left:560.80px;top:297.60px;" width="12" height="14" viewBox="0 0 12 14"><rect x="0.5" y="0.5" width="10.5" height="12.6" fill="#e3ebf7" stroke="#4a73b0" stroke-width="0.8"/><rect x="0.5" y="0.5" width="10.5" height="2.8" fill="#4f7fc6"/><path d="M0.5,6.3H11M0.5,9.6H11M4,3V13M7.5,3V13" stroke="#5f86c4" stroke-width="0.9"/><path d="M4.2,3.6 L9.8,8.6 L7.3,8.8 L8.4,11.4 L7,12 L5.9,9.4 L4.2,10.9 Z" fill="#e03c31" stroke="#a82018" stroke-width="0.4"/></svg>
<div class="a" style="left:582.00px;top:295.00px;width:61.80px;height:14.90px;background:#fff;border:1px solid #bdbdbd"></div>
<div class="a" style="left:629.80px;top:296.00px;width:13.00px;height:12.90px;background:#e5e5e5;border-left:1px solid #cfcfcf"></div>
<svg class="a" style="left:633.30px;top:300.25px;" width="7" height="5" viewBox="0 0 7 5"><polyline points="0.6,0.8 3.5,3.8 6.4,0.8" fill="none" stroke="#555" stroke-width="0.9"/></svg>
<div class="a t dlg" style="left:584.50px;top:295.65px;line-height:14px;height:14px;font-size:8.35px;color:#111">Percent</div>
<div class="a" style="left:227.00px;top:317.40px;width:92.50px;height:17.80px;background:#e1e1e1;border:1px solid #c2c2c2"></div>
<div class="a" style="left:306.20px;top:319.20px;width:1.00px;height:14.20px;background:#a9a9a9"></div>
<svg class="a" style="left:227.00px;top:317.40px;" width="92.5" height="17.8" viewBox="0 0 92.5 17.8"><g transform="rotate(180 40 8.9)"><path d="M40.00,2.85 L45.62,8.58 L42.16,8.58 L42.16,14.95 L37.84,14.95 L37.84,8.58 L34.38,8.58 Z" fill="#ee6a6a" stroke="#c03535" stroke-width="0.76" stroke-linejoin="round"/></g><polygon points="82.6,7.4 88.2,7.4 85.4,10.7" fill="#111"/></svg>
<div class="a t dlg" style="left:328.00px;top:319.30px;line-height:14px;height:14px;font-size:8.35px;color:#111">when &lt; 33</div>
<div class="a" style="left:521.20px;top:343.20px;width:59.30px;height:16.40px;background:#e5f1fb;border:1px solid #0078d7"></div>
<div class="a t dlg" style="left:525.80px;width:50px;text-align:center;top:344.50px;line-height:14px;height:14px;font-size:8.35px;color:#111">OK</div>
<div class="a" style="left:588.70px;top:343.20px;width:59.60px;height:16.40px;background:#e1e1e1;border:1px solid #b4b4b4"></div>
<div class="a t dlg" style="left:593.30px;width:50px;text-align:center;top:344.50px;line-height:14px;height:14px;font-size:8.35px;color:#111">Cancel</div>
<div class="a" style="left:0.00px;top:543.70px;width:1024.00px;height:32.30px;background:linear-gradient(90deg,#0c0c0d 0,#0c0c0d 70%,#1d1d1e 88%,#202021 100%)"></div>
<div class="a" style="left:0.00px;top:543.70px;width:38.30px;height:32.30px;background:#2c2c2d"></div>
<svg class="a" style="left:12.50px;top:553.50px;" width="14" height="13.5" viewBox="0 0 14 13.5"><g fill="#fff"><polygon points="0,2 5.8,1.1 5.8,6.3 0,6.3"/><polygon points="6.7,1 13.6,0 13.6,6.3 6.7,6.3"/><polygon points="0,7.1 5.8,7.1 5.8,12.3 0,11.5"/><polygon points="6.7,7.1 13.6,7.1 13.6,13.4 6.7,12.4"/></g></svg>
<div class="a" style="left:38.30px;top:543.70px;width:275.70px;height:32.30px;background:#f2f2f2"></div>
<svg class="a" style="left:44.00px;top:550.00px;" width="20" height="20" viewBox="0 0 20 20"><circle cx="10.2" cy="9.8" r="7.3" fill="none" stroke="#0a0a0a" stroke-width="2.2"/></svg>
<div class="a t" style="left:71.00px;top:553.80px;line-height:14px;height:14px;font-size:10.75px;color:#2b2b2b">Type here to search</div>
<svg class="a" style="left:292.00px;top:553.00px;" width="12" height="15" viewBox="0 0 12 15"><rect x="3.6" y="0.7" width="4.8" height="8.3" rx="2.4" fill="#f2f2f2" stroke="#444" stroke-width="1.1"/><path d="M1.3,6.5V8A4.7,4.2 0 0 0 10.7,8V6.5" fill="none" stroke="#444" stroke-width="1"/><path d="M6,12.2V14M3.5,14.2H8.5" stroke="#444" stroke-width="1"/></svg>
<svg class="a" style="left:325.00px;top:553.00px;" width="16" height="14" viewBox="0 0 16 14"><g fill="none" stroke="#e8e8e8" stroke-width="1"><rect x="2" y="3.3" width="7" height="6.6"/><path d="M1,1H10M1,12.3H10M13,0.5V13"/></g><rect x="12.2" y="4.6" width="1.6" height="1.8" fill="#fff"/></svg>
<svg class="a" style="left:364.00px;top:551.50px;" width="20" height="17" viewBox="0 0 20 17"><path d="M1,2.2 Q1,1 2.2,1 H7 L9,3 H17.5 Q18.7,3 18.7,4.2 V15 H1 Z" fill="#f1c44f"/><path d="M1,5.5 H18.7 V15 Q18.7,16 17.7,16 H2 Q1,16 1,15 Z" fill="#fbe08f"/><rect x="4" y="9" width="11.7" height="7" fill="#3d9ae0"/><rect x="6.5" y="12" width="6.7" height="4" fill="#f2f8fd"/></svg>
<div class="a" style="left:358.00px;top:574.30px;width:25.00px;height:1.70px;background:#84cdec"></div>
<div class="a" style="left:383.00px;top:574.30px;width:7.00px;height:1.70px;background:#5f7f9a"></div>
<svg class="a" style="left:406.30px;top:552.50px;" width="16" height="16" viewBox="0 0 16 16"><rect x="0" y="0" width="15.2" height="14.3" fill="#fce100"/><polygon points="8,7.2 15.2,7.2 8,14.2" fill="#141414"/></svg>
<div class="a" style="left:434.50px;top:543.70px;width:36.30px;height:32.30px;background:#3a3a3b"></div>
<div class="a" style="left:470.80px;top:543.70px;width:1.00px;height:32.30px;background:#2a2a2b"></div>
<div class="a" style="left:434.50px;top:574.00px;width:36.50px;height:2.00px;background:#84cdec"></div>
<svg class="a" style="left:443.50px;top:549.50px;" width="20" height="19" viewBox="0 0 20 19"><rect x="1.5" y="1" width="16.5" height="15.5" rx="1" fill="#e4f1e4" stroke="#a9cfab" stroke-width="0.7"/><path d="M10.5,4H18M10.5,7H18M10.5,10H18M10.5,13H18M13.5,1.5V16" stroke="#b9d6bb" stroke-width="0.6"/><rect x="1.5" y="1" width="9" height="4" fill="#c9e5cb" opacity="0.8"/><path d="M3.2,3.6 L10.4,13.2 M10.4,3.6 L3.2,13.2" stroke="#2f9a3f" stroke-width="2.3"/><path d="M3.2,3.6 L10.4,13.2" stroke="#1f7f30" stroke-width="0.8"/><rect x="2.5" y="14" width="15" height="4" fill="#f3f8f3" stroke="#b5cfb7" stroke-width="0.5"/><rect x="12.2" y="9.5" width="6.5" height="5.5" fill="#eef5ee" stroke="#a9c8ab" stroke-width="0.5"/></svg>
<svg class="a" style="left:484.00px;top:550.50px;" width="19" height="19" viewBox="0 0 19 19"><circle cx="9.5" cy="9.5" r="9.2" fill="#db4437"/><path d="M9.5,9.5 L1.55,4.9 A9.2,9.2 0 0 0 6.2,18.1 Z" fill="#0f9d58"/><path d="M9.5,9.5 L6.2,18.1 A9.2,9.2 0 0 0 17.45,4.9 Z" fill="#ffcd40"/><path d="M9.5,9.5 L17.45,4.9 A9.2,9.2 0 0 0 1.55,4.9 Z" fill="#db4437"/><circle cx="9.5" cy="9.5" r="4.3" fill="#fff"/><circle cx="9.5" cy="9.5" r="3.4" fill="#4285f4"/></svg>
<div class="a" style="left:478.00px;top:574.00px;width:32.00px;height:2.00px;background:#84cdec"></div>
<svg class="a" style="left:524.00px;top:550.50px;" width="20" height="20" viewBox="0 0 20 20"><circle cx="9.8" cy="9.6" r="9.5" fill="#1ed760"/><g fill="none" stroke="#0d0d0e" stroke-linecap="round"><path d="M4.2,6.8 Q10,5 15.6,7.8" stroke-width="1.9"/><path d="M4.8,10 Q10,8.5 14.6,10.9" stroke-width="1.6"/><path d="M5.4,13 Q9.8,11.8 13.6,13.8" stroke-width="1.3"/></g></svg>
<div class="a" style="left:518.00px;top:574.00px;width:32.00px;height:2.00px;background:#84cdec"></div>
<svg class="a" style="left:564.00px;top:550.00px;" width="22" height="20" viewBox="0 0 22 20"><path d="M9.5,4.5 C3,4.5 0.5,9 1,12.5 C1.5,16.5 6,18.5 10,17 C11.5,16.3 10.5,14.5 11.8,13.5 C13.2,12.5 16,13.5 17,11 C18.2,7.5 15,4.5 9.5,4.5 Z" fill="#eef1f6" stroke="#aeb6c4" stroke-width="0.6"/><circle cx="5" cy="9" r="1.3" fill="#e8453c"/><circle cx="8.5" cy="7.3" r="1.3" fill="#f5b400"/><circle cx="4.8" cy="12.8" r="1.3" fill="#3a7de0"/><circle cx="8" cy="14.8" r="1.3" fill="#2fa84f"/><path d="M19.5,1 L11.5,15.5" stroke="#d9963a" stroke-width="1.8" stroke-linecap="round"/><path d="M19.8,0.6 L18,3.8" stroke="#8a5a20" stroke-width="1.9" stroke-linecap="round"/></svg>
<div class="a" style="left:558.00px;top:574.00px;width:32.00px;height:2.00px;background:#84cdec"></div>
<svg class="a" style="left:804.50px;top:552.60px;" width="13.5" height="13.5" viewBox="0 0 15 15"><g fill="none" stroke="#e6e6e6" stroke-width="1.15"><circle cx="9.8" cy="3.2" r="2.2"/><path d="M6.3,10.5 V9.5 Q6.3,6.3 9.8,6.3 Q13.3,6.3 13.3,9.5 V10.5"/><circle cx="4.3" cy="7.2" r="2"/><path d="M1,14 V13 Q1,10.2 4.3,10.2 Q7.6,10.2 7.6,13 V14"/></g></svg>
<svg class="a" style="left:834.50px;top:556.50px;" width="11" height="7" viewBox="0 0 11 7"><polyline points="0.8,6 5.3,1.2 9.8,6" fill="none" stroke="#fff" stroke-width="1.1"/></svg>
<svg class="a" style="left:851.00px;top:555.50px;" width="16" height="10" viewBox="0 0 16 10"><path d="M3.5,9 Q0.6,9 0.6,6.6 Q0.6,4.4 3,4.2 Q3.6,1 7,1 Q9.6,1 10.6,3.4 Q14.4,3.2 14.6,6.4 Q14.6,9 12,9 Z" fill="#fff"/></svg>
<svg class="a" style="left:871.00px;top:555.00px;" width="16" height="10" viewBox="0 0 16 10"><rect x="4" y="2.5" width="10.5" height="6.5" fill="#fff"/><rect x="14.5" y="4.2" width="1.2" height="3" fill="#fff"/><path d="M1,1.5 L5.5,4.5" stroke="#fff" stroke-width="1.8"/><rect x="5.5" y="4" width="7.5" height="3.5" fill="#555"/></svg>
<svg class="a" style="left:892.00px;top:555.00px;" width="13" height="11" viewBox="0 0 13 11"><g fill="none" stroke="#fff" stroke-width="1"><path d="M1,10 A9,9 0 0 1 10,1" opacity="0.55"/><path d="M4,10 A6,6 0 0 1 10,4" opacity="0.8"/><path d="M7,10 A3,3 0 0 1 10,7"/></g><circle cx="10" cy="10" r="1" fill="#fff"/></svg>
<svg class="a" style="left:909.50px;top:554.50px;" width="14" height="12" viewBox="0 0 14 12"><path d="M0.8,4 H3.2 L6.2,1.2 V10.8 L3.2,8 H0.8 Z" fill="none" stroke="#fff" stroke-width="0.9"/><g fill="none" stroke="#fff" stroke-width="0.9"><path d="M8,4 Q9.3,6 8,8"/><path d="M9.8,2.6 Q12,6 9.8,9.4"/></g></svg>
<div class="a t" style="left:923.20px;width:60px;text-align:center;top:545.90px;line-height:14px;height:14px;font-size:9.3px;color:#ececec">5:59 PM</div>
<div class="a t" style="left:933.90px;top:560.60px;line-height:14px;height:14px;font-size:9.3px;color:#ececec;letter-spacing:0.375px;">3/8/2020</div>
<svg class="a" style="left:990.00px;top:552.50px;" width="22" height="20" viewBox="0 0 22 20"><path d="M1.5,1 H13.5 V10 H6 L3,13 V10 H1.5 Z" fill="#fff"/><path d="M3.5,3.5H11.5M3.5,5.5H11.5M3.5,7.5H9" stroke="#0d0d0e" stroke-width="0.7"/><circle cx="13.3" cy="14" r="6" fill="#1c1c1d" stroke="#e6e6e6" stroke-width="0.9"/></svg>
<div class="a t" style="left:998.30px;width:10px;text-align:center;top:559.70px;line-height:14px;height:14px;font-size:8.6px;color:#fff">3</div>
<div class="a" style="left:1020.50px;top:543.70px;width:1.00px;height:32.30px;background:#555"></div>
</body></html>
